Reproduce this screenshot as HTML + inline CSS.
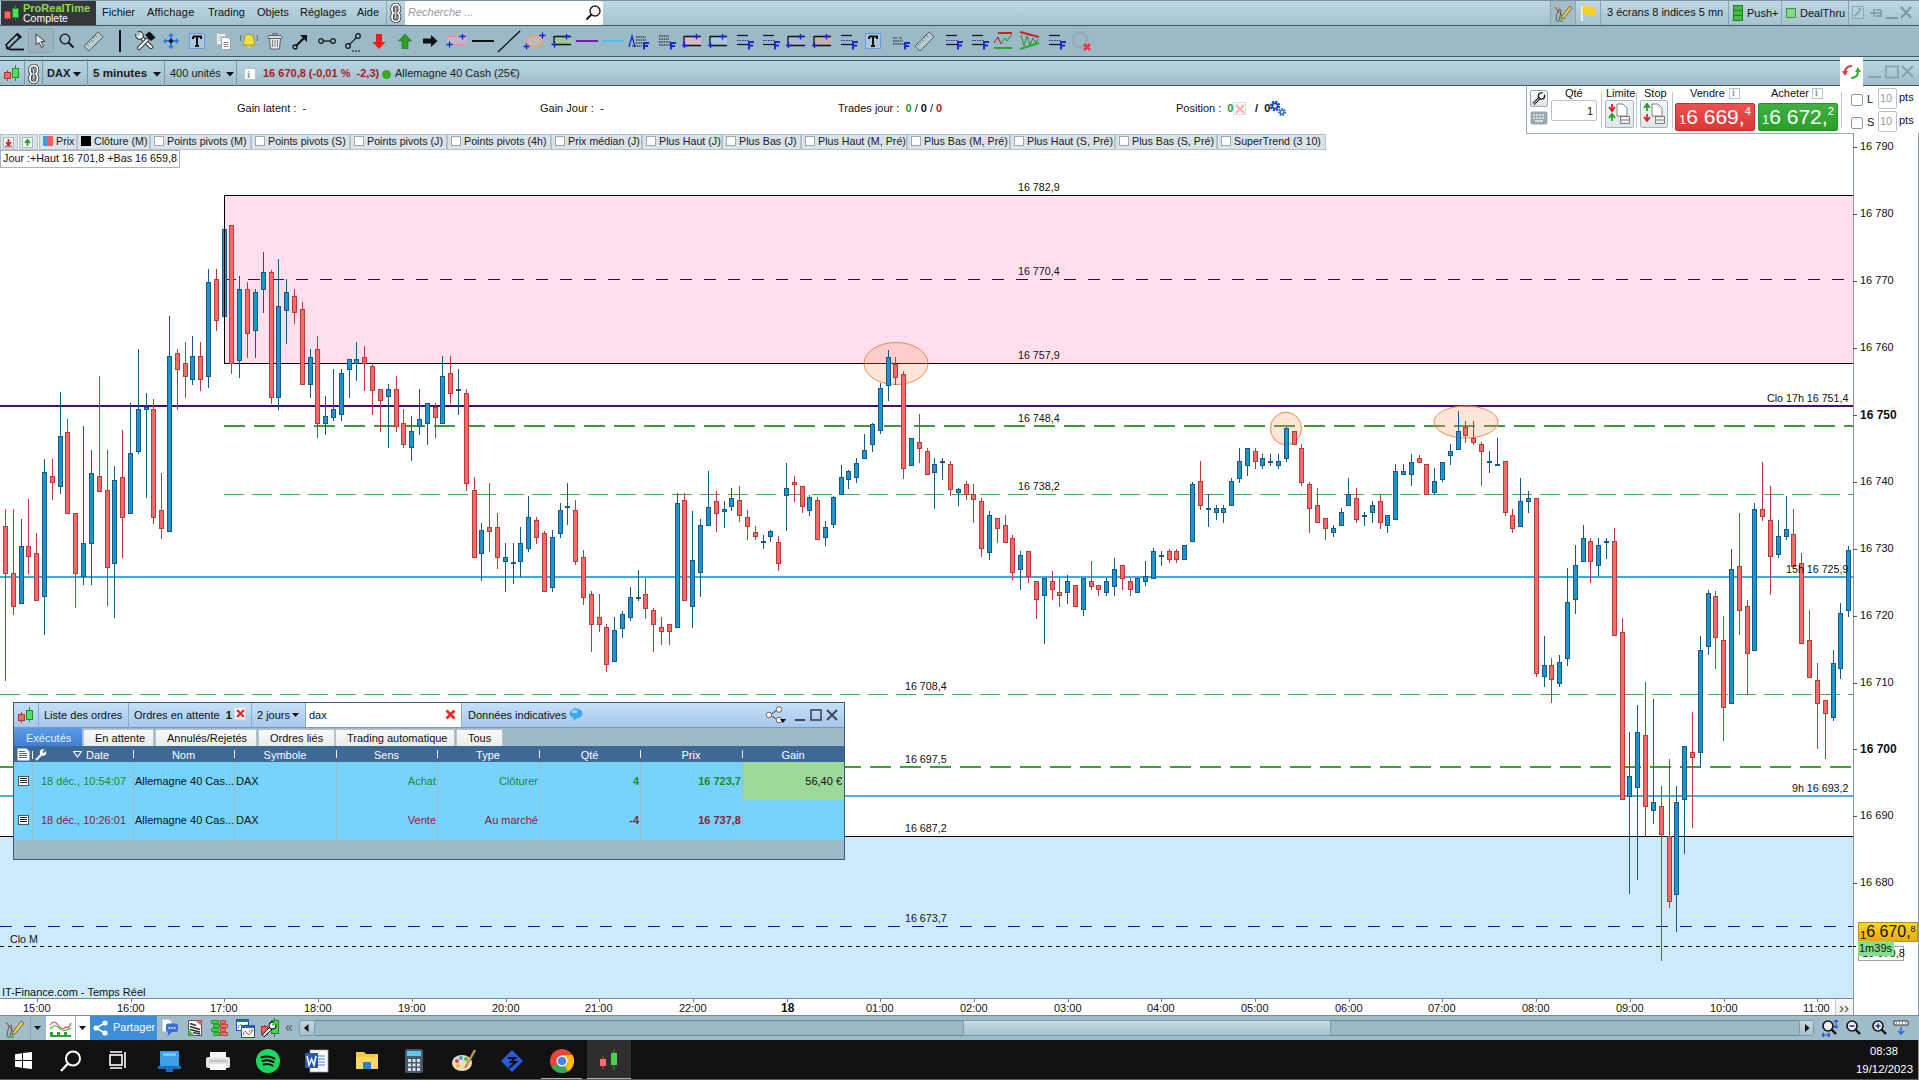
<!DOCTYPE html>
<html><head><meta charset="utf-8">
<style>
*{margin:0;padding:0;box-sizing:border-box}
html,body{width:1919px;height:1080px;overflow:hidden;background:#fff;font-family:"Liberation Sans",sans-serif;font-size:12px;color:#111}
.a{position:absolute}
.t{position:absolute;white-space:nowrap;line-height:1}
#menubar{left:0;top:0;width:1919px;height:26px;background:linear-gradient(#bed9e4,#a5c2ce);border-top:1px solid #7a949f;border-bottom:1px solid #3f5b68}
#logo{left:1px;top:1px;width:95px;height:24px;background:#33373b}
#toolbar{left:0;top:26px;width:1919px;height:31px;background:#9bb9c7;border-bottom:1px solid #3f5b68}
#instbar{left:0;top:57px;width:1919px;height:29px;background:linear-gradient(#b8d6e2,#a0bdcb);border-top:4px solid #b5d3df;border-bottom:1px solid #3f5b68}
#instline{left:0;top:60px;width:1919px;height:1px;background:#3f5b68}
#gainbar{left:0;top:86px;width:1919px;height:47px;background:#fff}
#legend{left:0;top:133px;width:1853px;height:17px;background:#fff}
.lg{position:absolute;top:134px;height:16px;background:#d9e3e8;border:1px solid #b4c2c9;font-size:10.7px;line-height:13px;padding-left:3px;white-space:nowrap;color:#222}
.cb{display:inline-block;width:10px;height:10px;border:1px solid #a0a8ac;background:#fff;vertical-align:-1px;margin-right:3px}
#axis{left:1853px;top:133px;width:66px;height:884px;background:#fff;border-left:1px solid #8a9aa3}
.pl{position:absolute;left:1860px;font-size:11px;line-height:1;color:#111}
.tick{position:absolute;left:1853px;width:4px;height:1px;background:#555}
#timebar{left:0;top:998px;width:1853px;height:18px;background:#fff;border-top:1px solid #7a8a90;border-bottom:1px solid #7a8a90}
.tl{position:absolute;top:1003px;font-size:11px;line-height:1;color:#111}
#bottombar{left:0;top:1016px;width:1919px;height:24px;background:#9fbccb}
#taskbar{left:0;top:1040px;width:1919px;height:40px;background:#111}
</style></head><body>

<!-- MENU BAR -->
<div id="menubar" class="a"></div>
<div id="logo" class="a"></div>
<svg class="a" style="left:3px;top:4px" width="18" height="18" viewBox="0 0 18 18">
<line x1="4.5" y1="6" x2="4.5" y2="16" stroke="#c03030"/><rect x="1.5" y="7.5" width="6" height="7" fill="#f06a6a" stroke="#b83030"/>
<line x1="12.5" y1="1" x2="12.5" y2="16" stroke="#209030"/><rect x="9.5" y="4.5" width="6" height="9" fill="#50e060" stroke="#189028"/>
</svg>
<div class="t" style="left:23px;top:3px;font-size:11px;font-weight:700;color:#8ade44">ProRealTime</div>
<div class="t" style="left:23px;top:13px;font-size:10.5px;color:#fff">Complete</div>
<div class="t" style="left:102px;top:7px;font-size:11px">Fichier</div>
<div class="t" style="left:147px;top:7px;font-size:11px;letter-spacing:0.2px">Affichage</div>
<div class="t" style="left:208px;top:7px;font-size:11px">Trading</div>
<div class="t" style="left:257px;top:7px;font-size:11px">Objets</div>
<div class="t" style="left:300px;top:7px;font-size:11px">Réglages</div>
<div class="t" style="left:357px;top:7px;font-size:11px">Aide</div>
<div class="a" style="left:386px;top:1px;width:1px;height:24px;background:#8aa4b0"></div>
<svg class="a" style="left:390px;top:3px" width="12" height="20" viewBox="0 0 12 20"><rect x="2" y="1.5" width="7.5" height="9" rx="3.75" fill="none" stroke="#333" stroke-width="3.4"/><rect x="2" y="9.5" width="7.5" height="9" rx="3.75" fill="none" stroke="#333" stroke-width="3.4"/><rect x="2" y="1.5" width="7.5" height="9" rx="3.75" fill="none" stroke="#fff" stroke-width="1.8"/><rect x="2" y="9.5" width="7.5" height="9" rx="3.75" fill="none" stroke="#fff" stroke-width="1.8"/><rect x="4.8" y="4.5" width="2" height="11" rx="1" fill="#fff" stroke="#333" stroke-width="0.8"/></svg>
<div class="a" style="left:405px;top:1px;width:198px;height:24px;background:#fff;border-radius:2px"></div>
<div class="t" style="left:408px;top:7px;font-size:11px;font-style:italic;color:#9a9a9a">Recherche ...</div>
<svg class="a" style="left:585px;top:4px" width="17" height="18" viewBox="0 0 17 18"><circle cx="10" cy="7" r="5" fill="#f4f4f4" stroke="#222" stroke-width="1.4"/><line x1="6.5" y1="10.5" x2="1.5" y2="15.5" stroke="#111" stroke-width="2"/></svg>
<!-- right side -->
<div class="a" style="left:1550px;top:1px;width:1px;height:24px;background:#8aa4b0"></div>
<div class="a" style="left:1551px;top:1px;width:24px;height:24px;background:#a4bcc8"></div>
<svg class="a" style="left:1553px;top:3px" width="20" height="20" viewBox="0 0 20 20"><path d="M2 4 L12 16" stroke="#d03030" stroke-width="1"/><path d="M3 17 Q4 6 7 6 Q9 8 6 17" fill="none" stroke="#444" stroke-width="0.8"/><line x1="3" y1="18" x2="10" y2="18" stroke="#20a020" stroke-width="1.2"/><path d="M17 3 L19 5 L11 15 L8 16 L9 13 Z" fill="#f0d040" stroke="#555" stroke-width="0.8"/></svg>
<div class="a" style="left:1575px;top:1px;width:1px;height:24px;background:#8aa4b0"></div>
<svg class="a" style="left:1580px;top:4px" width="17" height="18" viewBox="0 0 17 18"><line x1="2" y1="2" x2="2" y2="17" stroke="#fff" stroke-width="1.5"/><path d="M2.5 2 Q8 0 10 3 Q13 5 16 3 L16 11 Q13 13 10 11 Q7 9 2.5 11 Z" fill="#f8d020"/></svg>
<div class="a" style="left:1600px;top:1px;width:1px;height:24px;background:#8aa4b0"></div>
<div class="t" style="left:1607px;top:7px;font-size:11px">3 écrans 8 indices 5 mn</div>
<div class="a" style="left:1728px;top:1px;width:1px;height:24px;background:#8aa4b0"></div>
<div class="a" style="left:1733px;top:5px;width:10px;height:16px;background:#40c040;border:1px solid #2a7a2a"></div>
<div class="a" style="left:1734px;top:10px;width:8px;height:1px;background:#2a7a2a"></div>
<div class="a" style="left:1734px;top:15px;width:8px;height:1px;background:#2a7a2a"></div>
<div class="t" style="left:1747px;top:8px;font-size:11px">Push+</div>
<div class="a" style="left:1781px;top:1px;width:1px;height:24px;background:#8aa4b0"></div>
<div class="a" style="left:1786px;top:8px;width:10px;height:10px;background:#7ee07e;border:1px solid #4a8a5a"></div>
<div class="t" style="left:1800px;top:8px;font-size:11px">DealThru</div>
<div class="a" style="left:1848px;top:1px;width:1px;height:24px;background:#8aa4b0"></div>
<svg class="a" style="left:1852px;top:5px" width="62" height="16" viewBox="0 0 62 16"><rect x="0.5" y="1.5" width="11" height="12" fill="none" stroke="#7a98a8" stroke-dasharray="2 1"/><path d="M3 11 L8 5 M7 3 L9 5" stroke="#7a98a8" stroke-width="1.3"/><path d="M18 8 L30 8 M22 4 L22 12 M24 5 L29 5 L29 11 L24 11" stroke="#7a98a8" stroke-width="1.5" fill="none"/><line x1="34" y1="13" x2="46" y2="13" stroke="#7a98a8" stroke-width="2"/><path d="M49 2 L59 13 M59 2 L49 13" stroke="#7a98a8" stroke-width="2"/></svg>

<!-- TOOLBAR -->
<div id="toolbar" class="a"></div>
<svg class="a" style="left:5px;top:31px" width="20" height="20" viewBox="0 0 20 20"><path d="M3 18 L1 14 L12 3 L15 6 L4 17 Z" fill="none" stroke="#111" stroke-width="1.5"/><path d="M11 4 L13 2 L17 6 L15 8 Z" fill="#111"/><path d="M1 14 L1 18 L5 18 Z" fill="#111"/><line x1="4" y1="18.5" x2="19" y2="18.5" stroke="#111" stroke-width="1.8"/></svg>
<div class="a" style="left:28px;top:28px;width:26px;height:25px;background:#9cb4c0;border:1px solid #8aa2ae;border-radius:3px"></div>
<svg class="a" style="left:35px;top:33px" width="12" height="16" viewBox="0 0 12 16"><path d="M1 1 L1 12 L4 9.5 L6.5 14.5 L8.5 13.5 L6 8.5 L10 8.5 Z" fill="#e8e8e8" stroke="#333" stroke-width="0.9"/></svg>
<svg class="a" style="left:59px;top:33px" width="16" height="16" viewBox="0 0 16 16"><circle cx="6" cy="6" r="4.8" fill="none" stroke="#111" stroke-width="1.3"/><line x1="9.5" y1="9.5" x2="14.5" y2="14.5" stroke="#111" stroke-width="1.8"/></svg>
<svg class="a" style="left:83px;top:31px" width="21" height="21" viewBox="0 0 21 21"><g transform="rotate(-45 10.5 10.5)"><rect x="0.5" y="7" width="20" height="7" fill="#b8ccd4" stroke="#555" stroke-width="0.9"/><path d="M4 7v3M7 7v2M10 7v3M13 7v2M16 7v3" stroke="#555" stroke-width="0.8"/></g></svg>
<div class="a" style="left:119px;top:30px;width:2px;height:22px;background:#111"></div>
<svg class="a" style="left:135px;top:31px" width="21" height="20" viewBox="0 0 21 20"><path d="M6 6 L16 16" stroke="#333" stroke-width="4.2" stroke-linecap="round"/><path d="M6 6 L16 16" stroke="#f4f4f4" stroke-width="2.4" stroke-linecap="round"/><circle cx="4.5" cy="4.5" r="3.8" fill="#f4f4f4" stroke="#333" stroke-width="1.2"/><path d="M1 1 L4.5 4.5" stroke="#9bb9c7" stroke-width="2.6"/><path d="M4 17 L12 9" stroke="#333" stroke-width="4.2" stroke-linecap="round"/><path d="M4 17 L12 9" stroke="#f4f4f4" stroke-width="2.4" stroke-linecap="round"/><path d="M10 4 L14.5 0.5 L20.5 6.5 L16 10 Z" fill="#111"/></svg>
<svg class="a" style="left:162px;top:32px" width="18" height="18" viewBox="0 0 18 18"><path d="M9 1 L12 4 L10 4 L10 8 L14 8 L14 6 L17 9 L14 12 L14 10 L10 10 L10 14 L12 14 L9 17 L6 14 L8 14 L8 10 L4 10 L4 12 L1 9 L4 6 L4 8 L8 8 L8 4 L6 4 Z" fill="#2a7ae0"/><circle cx="9" cy="9" r="2" fill="#111"/></svg>
<svg class="a" style="left:189px;top:33px" width="17" height="17" viewBox="0 0 17 17"><rect x="0.5" y="0.5" width="15" height="15" fill="#acc8dc" stroke="#6a9ae0"/><path d="M4 3.5 L12 3.5 L12 6 M4 3.5 L4 6 M8 3.5 L8 13 M6 13 L10 13" stroke="#111" stroke-width="2" fill="none"/></svg>
<svg class="a" style="left:215px;top:32px" width="17" height="18" viewBox="0 0 17 18"><rect x="1.5" y="1.5" width="9" height="11" fill="#e4ecf0" stroke="#b4c0c8"/><path d="M3 4.5h6M3 6.5h6M3 8.5h6" stroke="#c8d0d4"/><path d="M6.5 5.5 H13 L15.5 8 V17.5 H6.5 Z" fill="#fff" stroke="#98a6ae"/><path d="M8.5 10.5h5M8.5 12.5h5M8.5 14.5h5" stroke="#888"/></svg>
<svg class="a" style="left:239px;top:32px" width="20" height="18" viewBox="0 0 20 18"><path d="M10 2 Q5 3 5 9 L4 13 L16 13 L15 9 Q15 3 10 2 Z" fill="#f0e040" stroke="#9a8a10" stroke-width="0.8"/><circle cx="10" cy="15" r="1.8" fill="#e0d040"/><path d="M2 3 Q1 6 2 9 M18 3 Q19 6 18 9" stroke="#555" stroke-width="0.8" fill="none"/></svg>
<svg class="a" style="left:267px;top:33px" width="16" height="17" viewBox="0 0 16 17"><rect x="1" y="2.5" width="14" height="3" rx="1" fill="#ddd" stroke="#555" stroke-width="0.9"/><rect x="6" y="0.5" width="4" height="2" fill="none" stroke="#555" stroke-width="0.8"/><path d="M2.5 5.5 L3.5 16 L12.5 16 L13.5 5.5 Z" fill="#e8e8e8" stroke="#555" stroke-width="0.9"/><path d="M5.5 7v7M8 7v7M10.5 7v7" stroke="#777" stroke-width="0.9"/></svg>
<svg class="a" style="left:292px;top:33px" width="17" height="17" viewBox="0 0 17 17"><circle cx="3" cy="14" r="2" fill="none" stroke="#111" stroke-width="1.3"/><path d="M4.5 12.5 L14 3" stroke="#111" stroke-width="2"/><path d="M8 2 L15 2 L15 9 Z" fill="#111"/></svg>
<svg class="a" style="left:318px;top:37px" width="18" height="8" viewBox="0 0 18 8"><circle cx="3" cy="4" r="2.3" fill="none" stroke="#111" stroke-width="1.2"/><circle cx="15" cy="4" r="2.3" fill="none" stroke="#111" stroke-width="1.2"/><line x1="5.3" y1="4" x2="12.7" y2="4" stroke="#111" stroke-width="1.3"/></svg>
<svg class="a" style="left:345px;top:33px" width="17" height="19" viewBox="0 0 17 19"><circle cx="3" cy="13" r="2.3" fill="none" stroke="#111" stroke-width="1.2"/><circle cx="13" cy="3" r="2.3" fill="none" stroke="#111" stroke-width="1.2"/><line x1="4.6" y1="11.4" x2="11.4" y2="4.6" stroke="#111" stroke-width="1.2"/><path d="M7 18h2M10 18h2M13 18h2" stroke="#111" stroke-width="1"/></svg>
<svg class="a" style="left:372px;top:34px" width="14" height="15" viewBox="0 0 14 15"><path d="M4 0 L10 0 L10 8 L13.5 8 L7 15 L0.5 8 L4 8 Z" fill="#ee1a1a"/></svg>
<svg class="a" style="left:398px;top:34px" width="14" height="15" viewBox="0 0 14 15"><path d="M4 15 L10 15 L10 7 L13.5 7 L7 0 L0.5 7 L4 7 Z" fill="#2aa02a" stroke="#1a701a" stroke-width="0.6"/></svg>
<svg class="a" style="left:423px;top:35px" width="15" height="12" viewBox="0 0 15 12"><path d="M0 3.5 L8 3.5 L8 0 L14.5 6 L8 12 L8 8.5 L0 8.5 Z" fill="#111"/></svg>
<svg class="a" style="left:445px;top:34px" width="24" height="14" viewBox="0 0 24 14"><rect x="2" y="2.5" width="20" height="8" fill="#c0b8c8"/><path d="M2 2.5 L22 2.5 M2 10.5 L22 10.5" stroke="#e89090" stroke-width="1.2"/><path d="M14.5 2.5 H20.5 M17.5 -0.5 V5.5 M1.5 10.5 H7.5 M4.5 7.5 V13.5" stroke="#1020e0" stroke-width="1.3"/></svg>
<div class="a" style="left:472px;top:40px;width:22px;height:2px;background:#111"></div>
<svg class="a" style="left:497px;top:30px" width="24" height="23" viewBox="0 0 24 23"><line x1="1" y1="22" x2="23" y2="1" stroke="#111" stroke-width="1.3"/></svg>
<svg class="a" style="left:523px;top:32px" width="23" height="18" viewBox="0 0 23 18"><ellipse cx="11.5" cy="9" rx="8" ry="5.5" fill="#c0b8c0" stroke="#f0a060" stroke-width="1.3"/><path d="M16.5 3.5 H22.5 M19.5 0.5 V6.5 M0.5 14.5 H6.5 M3.5 11.5 V17.5" stroke="#1020e0" stroke-width="1.3"/></svg>
<svg class="a" style="left:551px;top:34px" width="22" height="14" viewBox="0 0 22 14"><rect x="3" y="2.5" width="17" height="8" fill="#a0c8a0"/><path d="M3 2 L3 11 M3 10.5 L20 10.5 M3 2.5 L20 2.5" stroke="#111" stroke-width="1.3" fill="none"/><path d="M0.5 10.5 H6.5 M3.5 7.5 V13.5 M12.5 2.5 H18.5 M15.5 -0.5 V5.5" stroke="#1020d0" stroke-width="1.3"/></svg>
<div class="a" style="left:576px;top:40px;width:22px;height:2px;background:#7a1ab0"></div>
<div class="a" style="left:602px;top:40px;width:22px;height:2px;background:#50c0f0"></div>
<svg class="a" style="left:628px;top:34px" width="23" height="16" viewBox="0 0 23 16"><path d="M1 13 L4 2 L7 13" stroke="#1020d0" stroke-width="1.2" fill="none"/><path d="M8 3h10M8 6h10M8 9h10M4 12h10" stroke="#111" stroke-width="1" stroke-dasharray="1.5 0.8"/><path d="M16 15.5 L16 9 L21 9 M16 12 L20 12" stroke="#1a2ad0" stroke-width="2" fill="none"/></svg>
<svg class="a" style="left:658px;top:34px" width="20" height="16" viewBox="0 0 20 16"><path d="M1 2h10M1 5h10M1 8h12M1 11h12" stroke="#111" stroke-width="1" stroke-dasharray="1.5 0.8"/><path d="M13 15.5 L13 9 L18 9 M13 12 L17 12" stroke="#1a2ad0" stroke-width="2" fill="none"/></svg>
<svg class="a" style="left:682px;top:34px" width="21" height="14" viewBox="0 0 21 14"><rect x="2" y="2.5" width="17" height="9" fill="#d8b8c8"/><path d="M2 2 L2 12 M2 11.5 L19 11.5 M2 2.5 L19 2.5" stroke="#111" stroke-width="1.3" fill="none"/><path d="M-0.5 11.5 H5.5 M2.5 8.5 V14.5 M11.5 2.5 H17.5 M14.5 -0.5 V5.5" stroke="#1020d0" stroke-width="1.3"/></svg><svg class="a" style="left:708px;top:34px" width="21" height="14" viewBox="0 0 21 14"><rect x="2" y="2.5" width="17" height="9" fill="#a8c8e0"/><path d="M2 2 L2 12 M2 11.5 L19 11.5 M2 2.5 L19 2.5" stroke="#111" stroke-width="1.3" fill="none"/><path d="M-0.5 11.5 H5.5 M2.5 8.5 V14.5 M11.5 2.5 H17.5 M14.5 -0.5 V5.5" stroke="#1020d0" stroke-width="1.3"/></svg><svg class="a" style="left:736px;top:33px" width="20" height="18" viewBox="0 0 20 18"><line x1="1" y1="2.5" x2="12" y2="2.5" stroke="#111" stroke-width="1.2"/><line x1="1" y1="7.5" x2="13" y2="7.5" stroke="#2030c0" stroke-width="1" stroke-dasharray="1.5 1"/><line x1="1" y1="11.5" x2="12" y2="11.5" stroke="#111" stroke-width="1.2"/><path d="M13 16.5 L13 9 L18 9 M13 12.5 L17 12.5" stroke="#1a2ad0" stroke-width="2" fill="none"/></svg><svg class="a" style="left:762px;top:33px" width="20" height="18" viewBox="0 0 20 18"><line x1="1" y1="2.5" x2="12" y2="2.5" stroke="#111" stroke-width="1.2"/><line x1="1" y1="7.5" x2="13" y2="7.5" stroke="#2030c0" stroke-width="1" stroke-dasharray="1.5 1"/><line x1="1" y1="11.5" x2="12" y2="11.5" stroke="#111" stroke-width="1.2"/><path d="M13 16.5 L13 9 L18 9 M13 12.5 L17 12.5" stroke="#1a2ad0" stroke-width="2" fill="none"/></svg><svg class="a" style="left:786px;top:34px" width="21" height="14" viewBox="0 0 21 14"><rect x="2" y="2.5" width="17" height="9" fill="#a8b8d8"/><path d="M2 2 L2 12 M2 11.5 L19 11.5 M2 2.5 L19 2.5" stroke="#111" stroke-width="1.3" fill="none"/><path d="M-0.5 11.5 H5.5 M2.5 8.5 V14.5 M11.5 2.5 H17.5 M14.5 -0.5 V5.5" stroke="#1020d0" stroke-width="1.3"/></svg><svg class="a" style="left:812px;top:34px" width="21" height="14" viewBox="0 0 21 14"><rect x="2" y="2.5" width="17" height="9" fill="#c8b0b0"/><path d="M2 2 L2 12 M2 11.5 L19 11.5 M2 2.5 L19 2.5" stroke="#111" stroke-width="1.3" fill="none"/><path d="M-0.5 11.5 H5.5 M2.5 8.5 V14.5 M11.5 2.5 H17.5 M14.5 -0.5 V5.5" stroke="#1020d0" stroke-width="1.3"/></svg><svg class="a" style="left:840px;top:33px" width="20" height="18" viewBox="0 0 20 18"><line x1="1" y1="2.5" x2="12" y2="2.5" stroke="#111" stroke-width="1.2"/><line x1="1" y1="7.5" x2="13" y2="7.5" stroke="#2030c0" stroke-width="1" stroke-dasharray="1.5 1"/><line x1="1" y1="11.5" x2="12" y2="11.5" stroke="#111" stroke-width="1.2"/><path d="M13 16.5 L13 9 L18 9 M13 12.5 L17 12.5" stroke="#1a2ad0" stroke-width="2" fill="none"/></svg>
<svg class="a" style="left:865px;top:33px" width="17" height="17" viewBox="0 0 17 17"><rect x="0.5" y="0.5" width="15" height="15" fill="#acc8dc" stroke="#6a9ae0"/><path d="M4 3.5 L12 3.5 L12 6 M4 3.5 L4 6 M8 3.5 L8 13 M6 13 L10 13" stroke="#111" stroke-width="2" fill="none"/></svg>
<svg class="a" style="left:892px;top:35px" width="19" height="15" viewBox="0 0 19 15"><path d="M1 3h4M7 3h3M1 6h10M1 9h12" stroke="#111" stroke-width="1" stroke-dasharray="1.5 0.8"/><path d="M13 14.5 L13 8 L18 8 M13 11 L17 11" stroke="#1a2ad0" stroke-width="2" fill="none"/></svg>
<svg class="a" style="left:914px;top:31px" width="21" height="21" viewBox="0 0 21 21"><g transform="rotate(-45 10.5 10.5)"><rect x="0.5" y="7" width="20" height="7" fill="#b8ccd4" stroke="#555" stroke-width="0.9"/><path d="M4 7v3M7 7v2M10 7v3M13 7v2M16 7v3" stroke="#555" stroke-width="0.8"/></g></svg>
<svg class="a" style="left:945px;top:33px" width="20" height="18" viewBox="0 0 20 18"><line x1="1" y1="2.5" x2="12" y2="2.5" stroke="#111" stroke-width="1.2"/><line x1="1" y1="7.5" x2="13" y2="7.5" stroke="#2030c0" stroke-width="1" stroke-dasharray="1.5 1"/><line x1="1" y1="11.5" x2="12" y2="11.5" stroke="#111" stroke-width="1.2"/><path d="M13 16.5 L13 9 L18 9 M13 12.5 L17 12.5" stroke="#1a2ad0" stroke-width="2" fill="none"/></svg><svg class="a" style="left:971px;top:33px" width="20" height="18" viewBox="0 0 20 18"><line x1="1" y1="2.5" x2="12" y2="2.5" stroke="#111" stroke-width="1.2"/><line x1="1" y1="7.5" x2="13" y2="7.5" stroke="#2030c0" stroke-width="1" stroke-dasharray="1.5 1"/><line x1="1" y1="11.5" x2="12" y2="11.5" stroke="#111" stroke-width="1.2"/><path d="M13 16.5 L13 9 L18 9 M13 12.5 L17 12.5" stroke="#1a2ad0" stroke-width="2" fill="none"/></svg>
<svg class="a" style="left:993px;top:31px" width="21" height="20" viewBox="0 0 21 20"><line x1="5" y1="2" x2="19" y2="2" stroke="#d02020" stroke-width="2"/><line x1="1" y1="17" x2="19" y2="17" stroke="#20b020" stroke-width="2"/><path d="M1 12 L5 6 L8 13 L12 7 L14 10 L19 3" stroke="#20a020" stroke-width="1" fill="none"/><path d="M1 12 L5 6 L8 13" stroke="#d02020" stroke-width="1" fill="none"/></svg>
<svg class="a" style="left:1019px;top:30px" width="21" height="22" viewBox="0 0 21 22"><line x1="1" y1="2" x2="20" y2="7" stroke="#d02020" stroke-width="2"/><line x1="1" y1="19" x2="20" y2="13" stroke="#20b020" stroke-width="2"/><path d="M2 5 L5 16 L8 6 L11 15 L14 8 L17 13 L19 9" stroke="#208a20" stroke-width="0.9" fill="none"/></svg>
<svg class="a" style="left:1048px;top:33px" width="20" height="18" viewBox="0 0 20 18"><line x1="1" y1="2.5" x2="12" y2="2.5" stroke="#111" stroke-width="1.2"/><line x1="1" y1="7.5" x2="13" y2="7.5" stroke="#2030c0" stroke-width="1" stroke-dasharray="1.5 1"/><line x1="1" y1="11.5" x2="12" y2="11.5" stroke="#111" stroke-width="1.2"/><path d="M13 16.5 L13 9 L18 9 M13 12.5 L17 12.5" stroke="#1a2ad0" stroke-width="2" fill="none"/></svg>
<svg class="a" style="left:1071px;top:31px" width="21" height="21" viewBox="0 0 21 21"><circle cx="9" cy="9" r="7" fill="none" stroke="#98a8b0" stroke-width="3" stroke-dasharray="2 1"/><path d="M13 13 L19 19 M19 13 L13 19" stroke="#e83a3a" stroke-width="2.5"/></svg>

<!-- INSTRUMENT BAR -->
<div id="instbar" class="a"></div><div id="instline" class="a"></div>
<div class="a" style="left:24px;top:59px;width:1px;height:27px;background:#7d97a4"></div>
<div class="a" style="left:42px;top:59px;width:1px;height:27px;background:#7d97a4"></div>
<div class="a" style="left:87px;top:59px;width:1px;height:27px;background:#7d97a4"></div>
<div class="a" style="left:164px;top:59px;width:1px;height:27px;background:#7d97a4"></div>
<div class="a" style="left:236px;top:59px;width:1px;height:27px;background:#7d97a4"></div>
<svg class="a" style="left:3px;top:64px" width="18" height="18" viewBox="0 0 18 18">
<line x1="4.5" y1="6" x2="4.5" y2="17" stroke="#c03030"/><rect x="1.5" y="8.5" width="6" height="6" fill="#f06a6a" stroke="#b83030"/>
<line x1="12.5" y1="1" x2="12.5" y2="17" stroke="#209030"/><rect x="9.5" y="4.5" width="6" height="9" fill="#50e060" stroke="#189028"/></svg>
<svg class="a" style="left:28px;top:64px" width="12" height="20" viewBox="0 0 12 20"><rect x="2" y="1.5" width="7.5" height="9" rx="3.75" fill="none" stroke="#333" stroke-width="3.4"/><rect x="2" y="9.5" width="7.5" height="9" rx="3.75" fill="none" stroke="#333" stroke-width="3.4"/><rect x="2" y="1.5" width="7.5" height="9" rx="3.75" fill="none" stroke="#fff" stroke-width="1.8"/><rect x="2" y="9.5" width="7.5" height="9" rx="3.75" fill="none" stroke="#fff" stroke-width="1.8"/><rect x="4.8" y="4.5" width="2" height="11" rx="1" fill="#fff" stroke="#333" stroke-width="0.8"/></svg>
<div class="t" style="left:47px;top:68px;font-size:11px;font-weight:700;color:#1a1a2a">DAX</div>
<svg class="a" style="left:73px;top:72px" width="9" height="5"><path d="M0 0 L8 0 L4 4.5 Z" fill="#111"/></svg>
<div class="t" style="left:93px;top:67px;font-size:11.6px;font-weight:700;color:#1a1a1a">5 minutes</div>
<svg class="a" style="left:153px;top:72px" width="9" height="5"><path d="M0 0 L8 0 L4 4.5 Z" fill="#111"/></svg>
<div class="t" style="left:170px;top:68px;font-size:11px;color:#1a1a1a">400 unités</div>
<svg class="a" style="left:226px;top:72px" width="9" height="5"><path d="M0 0 L8 0 L4 4.5 Z" fill="#111"/></svg>
<div class="a" style="left:244px;top:68px;width:12px;height:12px;background:#fff;border:1px solid #b8c4ca"></div>
<div class="t" style="left:247px;top:69px;font-size:11px;font-weight:700;color:#999;font-family:'Liberation Serif',serif">i</div>
<div class="t" style="left:263px;top:68px;font-size:11px;font-weight:700;color:#a81a26">16 670,8 (-0,01 % &nbsp;-2,3)</div>
<div class="a" style="left:382px;top:70px;width:9px;height:9px;border-radius:50%;background:#3aaa1a"></div>
<div class="t" style="left:395px;top:68px;font-size:11px;color:#1a1a1a">Allemagne 40 Cash (25€)</div>
<div class="a" style="left:1840px;top:57px;width:23px;height:29px;background:#fff"></div>
<svg class="a" style="left:1842px;top:63px" width="20" height="18" viewBox="0 0 20 18"><path d="M10 3 Q3 3 3 10" stroke="#e03a3a" stroke-width="2.2" fill="none"/><path d="M0 8 L3 13 L6 8 Z" fill="#e03a3a"/><path d="M9 15 Q16 15 16 8" stroke="#30b030" stroke-width="2.2" fill="none"/><path d="M13 9 L16 4 L19 9 Z" fill="#30b030"/></svg>
<svg class="a" style="left:1866px;top:64px" width="50" height="16" viewBox="0 0 50 16"><line x1="2" y1="13" x2="15" y2="13" stroke="#8aa2ae" stroke-width="2"/><rect x="20" y="2.5" width="12" height="11" fill="none" stroke="#8aa2ae" stroke-width="1.8"/><path d="M36 2 L47 13 M47 2 L36 13" stroke="#8aa2ae" stroke-width="2"/></svg>

<!-- GAIN BAR -->
<div id="gainbar" class="a"></div>
<div class="t" style="left:237px;top:103px;font-size:11px">Gain latent : &nbsp;-</div>
<div class="t" style="left:540px;top:103px;font-size:11px">Gain Jour : &nbsp;-</div>
<div class="t" style="left:838px;top:103px;font-size:11px">Trades jour : &nbsp;<b style="color:#2a9a2a">0</b> / <b>0</b> / <b style="color:#c02020">0</b></div>
<div class="t" style="left:1176px;top:103px;font-size:11px">Position : &nbsp;<b style="color:#2a9a2a">0</b></div>
<div class="a" style="left:1233px;top:102px;width:13px;height:13px;border:1px solid #ddd;background:#fafafa"></div>
<svg class="a" style="left:1235px;top:104px" width="10" height="10"><path d="M1 1 L9 9 M9 1 L1 9" stroke="#f8b0b0" stroke-width="2.2"/></svg>
<div class="t" style="left:1255px;top:103px;font-size:11px"><b>/ &nbsp;0</b></div>
<svg class="a" style="left:1269px;top:100px" width="18" height="17" viewBox="0 0 18 17"><circle cx="6" cy="6" r="4" fill="none" stroke="#1a4ab8" stroke-width="2.6" stroke-dasharray="2 1.1"/><circle cx="6" cy="6" r="2.6" fill="none" stroke="#1a4ab8" stroke-width="1.6"/><circle cx="13" cy="12" r="3" fill="none" stroke="#2a6ad8" stroke-width="2.2" stroke-dasharray="1.6 1"/><circle cx="13" cy="12" r="1.8" fill="none" stroke="#2a6ad8" stroke-width="1.2"/></svg>
<!-- order panel -->
<div class="a" style="left:1526px;top:86px;width:1px;height:47px;background:#9aaab2"></div>
<div class="a" style="left:1526px;top:133px;width:393px;height:1px;background:#9aaab2"></div>
<div class="a" style="left:1530px;top:90px;width:18px;height:17px;background:linear-gradient(#fafafa,#dde4e8);border:1px solid #9aa8b0;border-radius:2px"></div>
<svg class="a" style="left:1531px;top:91px" width="16" height="15" viewBox="0 0 16 15"><path d="M2.5 13 L8.5 7" stroke="#222" stroke-width="3"/><path d="M2.5 13 L8.5 7" stroke="#fff" stroke-width="1"/><circle cx="10.5" cy="5" r="3.8" fill="#222"/><circle cx="10.5" cy="5" r="2.4" fill="#fff"/><path d="M10.5 5 L14.5 1" stroke="#f4f6f8" stroke-width="2.4"/></svg>
<svg class="a" style="left:1530px;top:111px" width="18" height="14" viewBox="0 0 18 14"><rect x="0.5" y="0.5" width="17" height="13" rx="2" fill="#9aa8b0"/><path d="M3 4h2M6 4h2M9 4h2M12 4h2M3 7h2M6 7h2M9 7h2M12 7h2M5 10h8" stroke="#e8eef0" stroke-width="1.3"/></svg>
<div class="t" style="left:1565px;top:88px;font-size:11px">Qté</div>
<div class="a" style="left:1551px;top:100px;width:46px;height:21px;background:#fff;border:1px solid #b8c2c8;border-radius:2px"></div>
<div class="t" style="left:1587px;top:106px;font-size:11px">1</div>
<div class="a" style="left:1601px;top:92px;width:1px;height:36px;background:#c0c8cc"></div>
<div class="t" style="left:1606px;top:88px;font-size:11px">Limite</div>
<div class="a" style="left:1605px;top:100px;width:29px;height:28px;background:linear-gradient(#f4f6f8,#dfe6ea);border:1px solid #a8b4ba;border-radius:2px"></div>
<svg class="a" style="left:1608px;top:103px" width="23" height="22" viewBox="0 0 23 22"><path d="M4 1v6M1 4l3 4 3-4" stroke="#e02020" stroke-width="1.8" fill="none"/><path d="M4 18v-6M1 15l3-4 3 4" stroke="#20a020" stroke-width="1.8" fill="none"/><path d="M9 1h6l4 4v8h-10z" fill="#fff" stroke="#666" stroke-width="0.8"/><rect x="12.5" y="13.5" width="9" height="7" fill="#eee" stroke="#666" stroke-width="0.8"/><path d="M12.5 17h9" stroke="#666" stroke-width="0.8"/></svg>
<div class="a" style="left:1636px;top:92px;width:1px;height:36px;background:#c0c8cc"></div>
<div class="t" style="left:1644px;top:88px;font-size:11px">Stop</div>
<div class="a" style="left:1640px;top:100px;width:28px;height:28px;background:linear-gradient(#f4f6f8,#dfe6ea);border:1px solid #a8b4ba;border-radius:2px"></div>
<svg class="a" style="left:1643px;top:103px" width="23" height="22" viewBox="0 0 23 22"><path d="M4 8V2M1 5l3-4 3 4" stroke="#20a020" stroke-width="1.8" fill="none"/><path d="M4 11v6M1 14l3 4 3-4" stroke="#e02020" stroke-width="1.8" fill="none"/><path d="M9 1h6l4 4v8h-10z" fill="#fff" stroke="#666" stroke-width="0.8"/><rect x="12.5" y="13.5" width="9" height="7" fill="#eee" stroke="#666" stroke-width="0.8"/><path d="M12.5 17h9" stroke="#666" stroke-width="0.8"/></svg>
<div class="a" style="left:1672px;top:92px;width:1px;height:36px;background:#c0c8cc"></div>
<div class="t" style="left:1690px;top:88px;font-size:11px">Vendre</div>
<div class="a" style="left:1729px;top:88px;width:11px;height:11px;background:#fff;border:1px solid #b8c4ca"></div>
<div class="t" style="left:1732px;top:88px;font-size:10px;font-weight:700;color:#999;font-family:'Liberation Serif',serif">i</div>
<div class="a" style="left:1675px;top:103px;width:80px;height:28px;background:linear-gradient(#f05050,#d83838);border:1px solid #c03030;border-radius:2px"></div>
<div class="t" style="left:1679px;top:106px;font-size:21px;color:#fff"><span style="font-size:13px">1</span>6 669,<sup style="font-size:11px;vertical-align:9px">4</sup></div>
<div class="t" style="left:1771px;top:88px;font-size:11px">Acheter</div>
<div class="a" style="left:1812px;top:88px;width:11px;height:11px;background:#fff;border:1px solid #b8c4ca"></div>
<div class="t" style="left:1815px;top:88px;font-size:10px;font-weight:700;color:#999;font-family:'Liberation Serif',serif">i</div>
<div class="a" style="left:1758px;top:103px;width:80px;height:28px;background:linear-gradient(#40b040,#28a028);border:1px solid #28902a;border-radius:2px"></div>
<div class="t" style="left:1762px;top:106px;font-size:21px;color:#fff"><span style="font-size:13px">1</span>6 672,<sup style="font-size:11px;vertical-align:9px">2</sup></div>
<div class="a" style="left:1841px;top:92px;width:1px;height:36px;background:#c0c8cc"></div>
<div class="a" style="left:1851px;top:94px;width:12px;height:12px;background:#fff;border:1px solid #8a9aa2;border-radius:2px"></div>
<div class="t" style="left:1867px;top:94px;font-size:11px">L</div>
<div class="a" style="left:1878px;top:88px;width:19px;height:21px;background:#fff;border:1px solid #b8c2c8;border-radius:2px"></div>
<div class="t" style="left:1880px;top:93px;font-size:11px;color:#999">10</div>
<div class="t" style="left:1899px;top:92px;font-size:11px">pts</div>
<div class="a" style="left:1851px;top:117px;width:12px;height:12px;background:#fff;border:1px solid #8a9aa2;border-radius:2px"></div>
<div class="t" style="left:1867px;top:117px;font-size:11px">S</div>
<div class="a" style="left:1878px;top:111px;width:19px;height:21px;background:#fff;border:1px solid #b8c2c8;border-radius:2px"></div>
<div class="t" style="left:1880px;top:116px;font-size:11px;color:#999">10</div>
<div class="t" style="left:1899px;top:115px;font-size:11px">pts</div>

<div class="lg" style="left:0px;width:18px;padding:0"></div>
<svg class="a" style="left:3px;top:137px" width="11" height="11" viewBox="0 0 11 11"><rect x="0.5" y="0.5" width="10" height="10" fill="#fff" stroke="#b0b8bc"/><path d="M5.5 2v5M3 5l2.5 3 2.5-3" stroke="#e02020" stroke-width="1.8" fill="none"/><path d="M2 9h7" stroke="#e02020" stroke-width="1.2"/></svg>
<div class="lg" style="left:19px;width:19px;padding:0"></div>
<svg class="a" style="left:22px;top:137px" width="11" height="11" viewBox="0 0 11 11"><rect x="0.5" y="0.5" width="10" height="10" fill="#fff" stroke="#b0b8bc"/><path d="M5.5 9V4M3 6l2.5-3 2.5 3" stroke="#20a020" stroke-width="1.8" fill="none"/></svg>
<div class="lg" style="left:39px;width:38px"><span style="display:inline-block;width:5px;height:10px;background:#3aa0e0;vertical-align:-1px"></span><span style="display:inline-block;width:5px;height:10px;background:#f06060;vertical-align:-1px;margin-right:3px"></span>Prix</div>
<div class="lg" style="left:77px;width:73px"><span style="display:inline-block;width:10px;height:10px;background:#000;vertical-align:-1px;margin-right:3px"></span>Clôture (M)</div>
<div class="lg" style="left:150px;width:101px"><span class="cb"></span>Points pivots (M)</div>
<div class="lg" style="left:251px;width:99px"><span class="cb"></span>Points pivots (S)</div>
<div class="lg" style="left:350px;width:97px"><span class="cb"></span>Points pivots (J)</div>
<div class="lg" style="left:447px;width:104px"><span class="cb"></span>Points pivots (4h)</div>
<div class="lg" style="left:551px;width:91px"><span class="cb"></span>Prix médian (J)</div>
<div class="lg" style="left:642px;width:80px"><span class="cb"></span>Plus Haut (J)</div>
<div class="lg" style="left:722px;width:79px"><span class="cb"></span>Plus Bas (J)</div>
<div class="lg" style="left:801px;width:106px"><span class="cb"></span>Plus Haut (M, Pré)</div>
<div class="lg" style="left:907px;width:103px"><span class="cb"></span>Plus Bas (M, Pré)</div>
<div class="lg" style="left:1010px;width:105px"><span class="cb"></span>Plus Haut (S, Pré)</div>
<div class="lg" style="left:1115px;width:102px"><span class="cb"></span>Plus Bas (S, Pré)</div>
<div class="lg" style="left:1217px;width:109px"><span class="cb"></span>SuperTrend (3 10)</div>
<div class="a" style="left:0;top:150px;width:180px;height:18px;background:#fff;border:1px solid #a8b4bb"></div>
<div class="t" style="left:3px;top:153px;font-size:10.8px">Jour :+Haut 16 701,8 +Bas 16 659,8</div>
<!-- CHART -->
<svg class="a" style="left:0;top:133px" width="1919" height="884" viewBox="0 133 1919 884">
<rect x="224" y="195" width="1629" height="168" fill="#ffdfee"/>
<rect x="0" y="836" width="1853" height="162" fill="#cdeafb"/>
<line x1="224" y1="195.5" x2="1853" y2="195.5" stroke="#000" stroke-width="1"/>
<line x1="224" y1="363.5" x2="1853" y2="363.5" stroke="#000" stroke-width="1"/>
<line x1="224.5" y1="195" x2="224.5" y2="362" stroke="#000" stroke-width="1"/>
<line x1="224" y1="279.5" x2="1853" y2="279.5" stroke="#1e0c88" stroke-width="1" stroke-dasharray="12 12"/>
<line x1="0" y1="406" x2="1853" y2="406" stroke="#4c0c72" stroke-width="2"/>
<line x1="224" y1="426" x2="1853" y2="426" stroke="#3e9a3e" stroke-width="2" stroke-dasharray="21 9"/>
<line x1="224" y1="494.5" x2="1853" y2="494.5" stroke="#4aa84a" stroke-width="1" stroke-dasharray="20 8"/>
<line x1="0" y1="577" x2="1853" y2="577" stroke="#42aae0" stroke-width="2"/>
<line x1="0" y1="694.5" x2="1853" y2="694.5" stroke="#4aa84a" stroke-width="1" stroke-dasharray="20 8"/>
<line x1="0" y1="767" x2="1853" y2="767" stroke="#36a436" stroke-width="2" stroke-dasharray="21 9"/>
<line x1="0" y1="796" x2="1853" y2="796" stroke="#5aaad4" stroke-width="2"/>
<line x1="0" y1="836.5" x2="1853" y2="836.5" stroke="#000" stroke-width="1"/>
<line x1="0" y1="926.5" x2="1853" y2="926.5" stroke="#0c1a88" stroke-width="1" stroke-dasharray="12 12"/>
<line x1="0" y1="946.5" x2="1853" y2="946.5" stroke="#000" stroke-width="1" stroke-dasharray="4 4"/>
<ellipse cx="896" cy="363.5" rx="32" ry="21" fill="rgba(246,150,100,0.25)" stroke="#f08a4a" stroke-width="1"/>
<ellipse cx="1286" cy="428.5" rx="15.5" ry="16.3" fill="rgba(246,150,100,0.25)" stroke="#f08a4a" stroke-width="1"/>
<ellipse cx="1466" cy="422" rx="32" ry="16" fill="rgba(246,150,100,0.25)" stroke="#f08a4a" stroke-width="1"/>
<line x1="5.5" y1="509" x2="5.5" y2="681" stroke="#b83c3c" stroke-width="1"/>
<rect x="3.5" y="526.5" width="4" height="47" fill="#f86a6a" stroke="#b83c3c" stroke-width="1"/>
<line x1="13.5" y1="509" x2="13.5" y2="615" stroke="#b83c3c" stroke-width="1"/>
<rect x="11.5" y="573.5" width="4" height="33" fill="#f86a6a" stroke="#b83c3c" stroke-width="1"/>
<line x1="21.5" y1="519" x2="21.5" y2="604" stroke="#135a84" stroke-width="1"/>
<rect x="19.5" y="546.5" width="4" height="57" fill="#1e94d0" stroke="#135a84" stroke-width="1"/>
<line x1="28.5" y1="499" x2="28.5" y2="574" stroke="#b83c3c" stroke-width="1"/>
<rect x="26.5" y="546.5" width="4" height="10" fill="#f86a6a" stroke="#b83c3c" stroke-width="1"/>
<line x1="36.5" y1="533" x2="36.5" y2="601" stroke="#b83c3c" stroke-width="1"/>
<rect x="34.5" y="553.5" width="4" height="47" fill="#f86a6a" stroke="#b83c3c" stroke-width="1"/>
<line x1="44.5" y1="459" x2="44.5" y2="635" stroke="#135a84" stroke-width="1"/>
<rect x="42.5" y="472.5" width="4" height="124" fill="#1e94d0" stroke="#135a84" stroke-width="1"/>
<line x1="52.5" y1="459" x2="52.5" y2="500" stroke="#b83c3c" stroke-width="1"/>
<rect x="50.5" y="476.5" width="4" height="6" fill="#f86a6a" stroke="#b83c3c" stroke-width="1"/>
<line x1="60.5" y1="392" x2="60.5" y2="494" stroke="#135a84" stroke-width="1"/>
<rect x="58.5" y="436.5" width="4" height="50" fill="#1e94d0" stroke="#135a84" stroke-width="1"/>
<line x1="67.5" y1="419" x2="67.5" y2="514" stroke="#b83c3c" stroke-width="1"/>
<rect x="65.5" y="432.5" width="4" height="81" fill="#f86a6a" stroke="#b83c3c" stroke-width="1"/>
<line x1="75.5" y1="513" x2="75.5" y2="608" stroke="#b83c3c" stroke-width="1"/>
<rect x="73.5" y="513.5" width="4" height="60" fill="#f86a6a" stroke="#b83c3c" stroke-width="1"/>
<line x1="83.5" y1="426" x2="83.5" y2="585" stroke="#135a84" stroke-width="1"/>
<rect x="81.5" y="543.5" width="4" height="33" fill="#1e94d0" stroke="#135a84" stroke-width="1"/>
<line x1="91.5" y1="450" x2="91.5" y2="585" stroke="#135a84" stroke-width="1"/>
<rect x="89.5" y="473.5" width="4" height="70" fill="#1e94d0" stroke="#135a84" stroke-width="1"/>
<line x1="99.5" y1="376" x2="99.5" y2="492" stroke="#b83c3c" stroke-width="1"/>
<rect x="97.5" y="476.5" width="4" height="15" fill="#f86a6a" stroke="#b83c3c" stroke-width="1"/>
<line x1="107.5" y1="450" x2="107.5" y2="606" stroke="#b83c3c" stroke-width="1"/>
<rect x="105.5" y="490.5" width="4" height="77" fill="#f86a6a" stroke="#b83c3c" stroke-width="1"/>
<line x1="114.5" y1="466" x2="114.5" y2="618" stroke="#135a84" stroke-width="1"/>
<rect x="112.5" y="480.5" width="4" height="83" fill="#1e94d0" stroke="#135a84" stroke-width="1"/>
<line x1="122.5" y1="430" x2="122.5" y2="558" stroke="#b83c3c" stroke-width="1"/>
<rect x="120.5" y="477.5" width="4" height="40" fill="#f86a6a" stroke="#b83c3c" stroke-width="1"/>
<line x1="130.5" y1="403" x2="130.5" y2="514" stroke="#135a84" stroke-width="1"/>
<rect x="128.5" y="453.5" width="4" height="60" fill="#1e94d0" stroke="#135a84" stroke-width="1"/>
<line x1="138.5" y1="349" x2="138.5" y2="454" stroke="#135a84" stroke-width="1"/>
<rect x="136.5" y="409.5" width="4" height="42" fill="#1e94d0" stroke="#135a84" stroke-width="1"/>
<line x1="146.5" y1="393" x2="146.5" y2="498" stroke="#135a84" stroke-width="1"/>
<rect x="144.5" y="407.5" width="4" height="2" fill="#1e94d0" stroke="#135a84" stroke-width="1"/>
<line x1="153.5" y1="399" x2="153.5" y2="524" stroke="#b83c3c" stroke-width="1"/>
<rect x="151.5" y="409.5" width="4" height="108" fill="#f86a6a" stroke="#b83c3c" stroke-width="1"/>
<line x1="161.5" y1="473" x2="161.5" y2="539" stroke="#b83c3c" stroke-width="1"/>
<rect x="159.5" y="510.5" width="4" height="18" fill="#f86a6a" stroke="#b83c3c" stroke-width="1"/>
<line x1="169.5" y1="316" x2="169.5" y2="532" stroke="#135a84" stroke-width="1"/>
<rect x="167.5" y="356.5" width="4" height="175" fill="#1e94d0" stroke="#135a84" stroke-width="1"/>
<line x1="177.5" y1="349" x2="177.5" y2="410" stroke="#b83c3c" stroke-width="1"/>
<rect x="175.5" y="353.5" width="4" height="16" fill="#f86a6a" stroke="#b83c3c" stroke-width="1"/>
<line x1="185.5" y1="342" x2="185.5" y2="398" stroke="#b83c3c" stroke-width="1"/>
<rect x="183.5" y="363.5" width="4" height="13" fill="#f86a6a" stroke="#b83c3c" stroke-width="1"/>
<line x1="192.5" y1="336" x2="192.5" y2="385" stroke="#135a84" stroke-width="1"/>
<rect x="190.5" y="356.5" width="4" height="23" fill="#1e94d0" stroke="#135a84" stroke-width="1"/>
<line x1="200.5" y1="342" x2="200.5" y2="391" stroke="#b83c3c" stroke-width="1"/>
<rect x="198.5" y="356.5" width="4" height="23" fill="#f86a6a" stroke="#b83c3c" stroke-width="1"/>
<line x1="208.5" y1="269" x2="208.5" y2="388" stroke="#135a84" stroke-width="1"/>
<rect x="206.5" y="282.5" width="4" height="94" fill="#1e94d0" stroke="#135a84" stroke-width="1"/>
<line x1="216.5" y1="269" x2="216.5" y2="331" stroke="#b83c3c" stroke-width="1"/>
<rect x="214.5" y="279.5" width="4" height="41" fill="#f86a6a" stroke="#b83c3c" stroke-width="1"/>
<line x1="224.5" y1="229" x2="224.5" y2="317" stroke="#135a84" stroke-width="1"/>
<rect x="222.5" y="229.5" width="4" height="87" fill="#1e94d0" stroke="#135a84" stroke-width="1"/>
<line x1="231.5" y1="225" x2="231.5" y2="374" stroke="#b83c3c" stroke-width="1"/>
<rect x="229.5" y="225.5" width="4" height="138" fill="#f86a6a" stroke="#b83c3c" stroke-width="1"/>
<line x1="239.5" y1="276" x2="239.5" y2="378" stroke="#135a84" stroke-width="1"/>
<rect x="237.5" y="289.5" width="4" height="71" fill="#1e94d0" stroke="#135a84" stroke-width="1"/>
<line x1="247.5" y1="282" x2="247.5" y2="358" stroke="#b83c3c" stroke-width="1"/>
<rect x="245.5" y="289.5" width="4" height="44" fill="#f86a6a" stroke="#b83c3c" stroke-width="1"/>
<line x1="255.5" y1="289" x2="255.5" y2="358" stroke="#135a84" stroke-width="1"/>
<rect x="253.5" y="292.5" width="4" height="38" fill="#1e94d0" stroke="#135a84" stroke-width="1"/>
<line x1="263.5" y1="252" x2="263.5" y2="313" stroke="#135a84" stroke-width="1"/>
<rect x="261.5" y="272.5" width="4" height="17" fill="#1e94d0" stroke="#135a84" stroke-width="1"/>
<line x1="271.5" y1="270" x2="271.5" y2="404" stroke="#b83c3c" stroke-width="1"/>
<rect x="269.5" y="272.5" width="4" height="125" fill="#f86a6a" stroke="#b83c3c" stroke-width="1"/>
<line x1="278.5" y1="259" x2="278.5" y2="410" stroke="#135a84" stroke-width="1"/>
<rect x="276.5" y="306.5" width="4" height="91" fill="#1e94d0" stroke="#135a84" stroke-width="1"/>
<line x1="286.5" y1="279" x2="286.5" y2="344" stroke="#135a84" stroke-width="1"/>
<rect x="284.5" y="292.5" width="4" height="18" fill="#1e94d0" stroke="#135a84" stroke-width="1"/>
<line x1="294.5" y1="289" x2="294.5" y2="324" stroke="#b83c3c" stroke-width="1"/>
<rect x="292.5" y="296.5" width="4" height="16" fill="#f86a6a" stroke="#b83c3c" stroke-width="1"/>
<line x1="302.5" y1="302" x2="302.5" y2="385" stroke="#b83c3c" stroke-width="1"/>
<rect x="300.5" y="309.5" width="4" height="75" fill="#f86a6a" stroke="#b83c3c" stroke-width="1"/>
<line x1="310.5" y1="349" x2="310.5" y2="398" stroke="#135a84" stroke-width="1"/>
<rect x="308.5" y="357.5" width="4" height="27" fill="#1e94d0" stroke="#135a84" stroke-width="1"/>
<line x1="317.5" y1="336" x2="317.5" y2="438" stroke="#b83c3c" stroke-width="1"/>
<rect x="315.5" y="349.5" width="4" height="74" fill="#f86a6a" stroke="#b83c3c" stroke-width="1"/>
<line x1="325.5" y1="396" x2="325.5" y2="435" stroke="#135a84" stroke-width="1"/>
<rect x="323.5" y="416.5" width="4" height="7" fill="#1e94d0" stroke="#135a84" stroke-width="1"/>
<line x1="333.5" y1="369" x2="333.5" y2="421" stroke="#135a84" stroke-width="1"/>
<rect x="331.5" y="409.5" width="4" height="8" fill="#1e94d0" stroke="#135a84" stroke-width="1"/>
<line x1="341.5" y1="369" x2="341.5" y2="421" stroke="#135a84" stroke-width="1"/>
<rect x="339.5" y="373.5" width="4" height="41" fill="#1e94d0" stroke="#135a84" stroke-width="1"/>
<line x1="349.5" y1="359" x2="349.5" y2="398" stroke="#135a84" stroke-width="1"/>
<rect x="347.5" y="359.5" width="4" height="10" fill="#1e94d0" stroke="#135a84" stroke-width="1"/>
<line x1="356.5" y1="342" x2="356.5" y2="381" stroke="#135a84" stroke-width="1"/>
<rect x="354.5" y="359.5" width="4" height="4" fill="#1e94d0" stroke="#135a84" stroke-width="1"/>
<line x1="364.5" y1="346" x2="364.5" y2="391" stroke="#b83c3c" stroke-width="1"/>
<rect x="362.5" y="357.5" width="4" height="6" fill="#f86a6a" stroke="#b83c3c" stroke-width="1"/>
<line x1="372.5" y1="364" x2="372.5" y2="415" stroke="#b83c3c" stroke-width="1"/>
<rect x="370.5" y="366.5" width="4" height="24" fill="#f86a6a" stroke="#b83c3c" stroke-width="1"/>
<line x1="380.5" y1="389" x2="380.5" y2="432" stroke="#b83c3c" stroke-width="1"/>
<rect x="378.5" y="389.5" width="4" height="11" fill="#f86a6a" stroke="#b83c3c" stroke-width="1"/>
<line x1="388.5" y1="384" x2="388.5" y2="448" stroke="#135a84" stroke-width="1"/>
<rect x="386.5" y="389.5" width="4" height="7" fill="#1e94d0" stroke="#135a84" stroke-width="1"/>
<line x1="396.5" y1="376" x2="396.5" y2="432" stroke="#b83c3c" stroke-width="1"/>
<rect x="394.5" y="389.5" width="4" height="37" fill="#f86a6a" stroke="#b83c3c" stroke-width="1"/>
<line x1="403.5" y1="409" x2="403.5" y2="448" stroke="#b83c3c" stroke-width="1"/>
<rect x="401.5" y="423.5" width="4" height="21" fill="#f86a6a" stroke="#b83c3c" stroke-width="1"/>
<line x1="411.5" y1="416" x2="411.5" y2="461" stroke="#135a84" stroke-width="1"/>
<rect x="409.5" y="431.5" width="4" height="16" fill="#1e94d0" stroke="#135a84" stroke-width="1"/>
<line x1="419.5" y1="389" x2="419.5" y2="435" stroke="#135a84" stroke-width="1"/>
<rect x="417.5" y="419.5" width="4" height="7" fill="#1e94d0" stroke="#135a84" stroke-width="1"/>
<line x1="427.5" y1="403" x2="427.5" y2="445" stroke="#135a84" stroke-width="1"/>
<rect x="425.5" y="403.5" width="4" height="20" fill="#1e94d0" stroke="#135a84" stroke-width="1"/>
<line x1="435.5" y1="403" x2="435.5" y2="438" stroke="#b83c3c" stroke-width="1"/>
<rect x="433.5" y="407.5" width="4" height="10" fill="#f86a6a" stroke="#b83c3c" stroke-width="1"/>
<line x1="442.5" y1="356" x2="442.5" y2="424" stroke="#135a84" stroke-width="1"/>
<rect x="440.5" y="376.5" width="4" height="47" fill="#1e94d0" stroke="#135a84" stroke-width="1"/>
<line x1="450.5" y1="356" x2="450.5" y2="404" stroke="#b83c3c" stroke-width="1"/>
<rect x="448.5" y="373.5" width="4" height="20" fill="#f86a6a" stroke="#b83c3c" stroke-width="1"/>
<line x1="458.5" y1="369" x2="458.5" y2="415" stroke="#135a84" stroke-width="1"/>
<rect x="456.5" y="389.5" width="4" height="1" fill="#1e94d0" stroke="#135a84" stroke-width="1"/>
<line x1="466.5" y1="389" x2="466.5" y2="491" stroke="#b83c3c" stroke-width="1"/>
<rect x="464.5" y="393.5" width="4" height="90" fill="#f86a6a" stroke="#b83c3c" stroke-width="1"/>
<line x1="474.5" y1="477" x2="474.5" y2="558" stroke="#b83c3c" stroke-width="1"/>
<rect x="472.5" y="490.5" width="4" height="67" fill="#f86a6a" stroke="#b83c3c" stroke-width="1"/>
<line x1="481.5" y1="523" x2="481.5" y2="581" stroke="#135a84" stroke-width="1"/>
<rect x="479.5" y="530.5" width="4" height="23" fill="#1e94d0" stroke="#135a84" stroke-width="1"/>
<line x1="489.5" y1="483" x2="489.5" y2="552" stroke="#b83c3c" stroke-width="1"/>
<rect x="487.5" y="527.5" width="4" height="4" fill="#f86a6a" stroke="#b83c3c" stroke-width="1"/>
<line x1="497.5" y1="513" x2="497.5" y2="569" stroke="#b83c3c" stroke-width="1"/>
<rect x="495.5" y="527.5" width="4" height="30" fill="#f86a6a" stroke="#b83c3c" stroke-width="1"/>
<line x1="505.5" y1="543" x2="505.5" y2="592" stroke="#135a84" stroke-width="1"/>
<rect x="503.5" y="557.5" width="4" height="4" fill="#1e94d0" stroke="#135a84" stroke-width="1"/>
<line x1="513.5" y1="543" x2="513.5" y2="584" stroke="#135a84" stroke-width="1"/>
<rect x="511.5" y="562.5" width="4" height="1" fill="#1e94d0" stroke="#135a84" stroke-width="1"/>
<line x1="520.5" y1="527" x2="520.5" y2="577" stroke="#135a84" stroke-width="1"/>
<rect x="518.5" y="543.5" width="4" height="18" fill="#1e94d0" stroke="#135a84" stroke-width="1"/>
<line x1="528.5" y1="496" x2="528.5" y2="552" stroke="#135a84" stroke-width="1"/>
<rect x="526.5" y="517.5" width="4" height="31" fill="#1e94d0" stroke="#135a84" stroke-width="1"/>
<line x1="536.5" y1="517" x2="536.5" y2="544" stroke="#b83c3c" stroke-width="1"/>
<rect x="534.5" y="520.5" width="4" height="17" fill="#f86a6a" stroke="#b83c3c" stroke-width="1"/>
<line x1="544.5" y1="531" x2="544.5" y2="592" stroke="#b83c3c" stroke-width="1"/>
<rect x="542.5" y="533.5" width="4" height="58" fill="#f86a6a" stroke="#b83c3c" stroke-width="1"/>
<line x1="552.5" y1="530" x2="552.5" y2="592" stroke="#135a84" stroke-width="1"/>
<rect x="550.5" y="537.5" width="4" height="50" fill="#1e94d0" stroke="#135a84" stroke-width="1"/>
<line x1="560.5" y1="503" x2="560.5" y2="538" stroke="#135a84" stroke-width="1"/>
<rect x="558.5" y="510.5" width="4" height="23" fill="#1e94d0" stroke="#135a84" stroke-width="1"/>
<line x1="567.5" y1="483" x2="567.5" y2="525" stroke="#135a84" stroke-width="1"/>
<rect x="565.5" y="506.5" width="4" height="1" fill="#1e94d0" stroke="#135a84" stroke-width="1"/>
<line x1="575.5" y1="500" x2="575.5" y2="565" stroke="#b83c3c" stroke-width="1"/>
<rect x="573.5" y="510.5" width="4" height="51" fill="#f86a6a" stroke="#b83c3c" stroke-width="1"/>
<line x1="583.5" y1="550" x2="583.5" y2="605" stroke="#b83c3c" stroke-width="1"/>
<rect x="581.5" y="557.5" width="4" height="40" fill="#f86a6a" stroke="#b83c3c" stroke-width="1"/>
<line x1="591.5" y1="591" x2="591.5" y2="652" stroke="#b83c3c" stroke-width="1"/>
<rect x="589.5" y="594.5" width="4" height="30" fill="#f86a6a" stroke="#b83c3c" stroke-width="1"/>
<line x1="599.5" y1="594" x2="599.5" y2="632" stroke="#b83c3c" stroke-width="1"/>
<rect x="597.5" y="617.5" width="4" height="7" fill="#f86a6a" stroke="#b83c3c" stroke-width="1"/>
<line x1="606.5" y1="624" x2="606.5" y2="672" stroke="#b83c3c" stroke-width="1"/>
<rect x="604.5" y="627.5" width="4" height="37" fill="#f86a6a" stroke="#b83c3c" stroke-width="1"/>
<line x1="614.5" y1="617" x2="614.5" y2="662" stroke="#135a84" stroke-width="1"/>
<rect x="612.5" y="630.5" width="4" height="31" fill="#1e94d0" stroke="#135a84" stroke-width="1"/>
<line x1="622.5" y1="611" x2="622.5" y2="638" stroke="#135a84" stroke-width="1"/>
<rect x="620.5" y="614.5" width="4" height="14" fill="#1e94d0" stroke="#135a84" stroke-width="1"/>
<line x1="630.5" y1="587" x2="630.5" y2="621" stroke="#135a84" stroke-width="1"/>
<rect x="628.5" y="597.5" width="4" height="20" fill="#1e94d0" stroke="#135a84" stroke-width="1"/>
<line x1="638.5" y1="570" x2="638.5" y2="601" stroke="#135a84" stroke-width="1"/>
<rect x="636.5" y="597.5" width="4" height="1" fill="#1e94d0" stroke="#135a84" stroke-width="1"/>
<line x1="645.5" y1="578" x2="645.5" y2="619" stroke="#b83c3c" stroke-width="1"/>
<rect x="643.5" y="594.5" width="4" height="14" fill="#f86a6a" stroke="#b83c3c" stroke-width="1"/>
<line x1="653.5" y1="608" x2="653.5" y2="652" stroke="#b83c3c" stroke-width="1"/>
<rect x="651.5" y="610.5" width="4" height="14" fill="#f86a6a" stroke="#b83c3c" stroke-width="1"/>
<line x1="661.5" y1="617" x2="661.5" y2="645" stroke="#b83c3c" stroke-width="1"/>
<rect x="659.5" y="627.5" width="4" height="4" fill="#f86a6a" stroke="#b83c3c" stroke-width="1"/>
<line x1="669.5" y1="624" x2="669.5" y2="645" stroke="#b83c3c" stroke-width="1"/>
<rect x="667.5" y="624.5" width="4" height="7" fill="#f86a6a" stroke="#b83c3c" stroke-width="1"/>
<line x1="677.5" y1="493" x2="677.5" y2="628" stroke="#135a84" stroke-width="1"/>
<rect x="675.5" y="503.5" width="4" height="124" fill="#1e94d0" stroke="#135a84" stroke-width="1"/>
<line x1="684.5" y1="493" x2="684.5" y2="601" stroke="#b83c3c" stroke-width="1"/>
<rect x="682.5" y="500.5" width="4" height="100" fill="#f86a6a" stroke="#b83c3c" stroke-width="1"/>
<line x1="692.5" y1="511" x2="692.5" y2="628" stroke="#135a84" stroke-width="1"/>
<rect x="690.5" y="560.5" width="4" height="46" fill="#1e94d0" stroke="#135a84" stroke-width="1"/>
<line x1="700.5" y1="519" x2="700.5" y2="597" stroke="#135a84" stroke-width="1"/>
<rect x="698.5" y="525.5" width="4" height="47" fill="#1e94d0" stroke="#135a84" stroke-width="1"/>
<line x1="708.5" y1="471" x2="708.5" y2="526" stroke="#135a84" stroke-width="1"/>
<rect x="706.5" y="507.5" width="4" height="18" fill="#1e94d0" stroke="#135a84" stroke-width="1"/>
<line x1="716.5" y1="491" x2="716.5" y2="532" stroke="#b83c3c" stroke-width="1"/>
<rect x="714.5" y="501.5" width="4" height="12" fill="#f86a6a" stroke="#b83c3c" stroke-width="1"/>
<line x1="724.5" y1="501" x2="724.5" y2="528" stroke="#135a84" stroke-width="1"/>
<rect x="722.5" y="509.5" width="4" height="2" fill="#1e94d0" stroke="#135a84" stroke-width="1"/>
<line x1="731.5" y1="488" x2="731.5" y2="511" stroke="#135a84" stroke-width="1"/>
<rect x="729.5" y="498.5" width="4" height="8" fill="#1e94d0" stroke="#135a84" stroke-width="1"/>
<line x1="739.5" y1="486" x2="739.5" y2="522" stroke="#b83c3c" stroke-width="1"/>
<rect x="737.5" y="500.5" width="4" height="15" fill="#f86a6a" stroke="#b83c3c" stroke-width="1"/>
<line x1="747.5" y1="510" x2="747.5" y2="540" stroke="#b83c3c" stroke-width="1"/>
<rect x="745.5" y="517.5" width="4" height="9" fill="#f86a6a" stroke="#b83c3c" stroke-width="1"/>
<line x1="755.5" y1="526" x2="755.5" y2="540" stroke="#b83c3c" stroke-width="1"/>
<rect x="753.5" y="532.5" width="4" height="4" fill="#f86a6a" stroke="#b83c3c" stroke-width="1"/>
<line x1="763.5" y1="535" x2="763.5" y2="549" stroke="#135a84" stroke-width="1"/>
<rect x="761.5" y="541.5" width="4" height="1" fill="#1e94d0" stroke="#135a84" stroke-width="1"/>
<line x1="770.5" y1="530" x2="770.5" y2="542" stroke="#135a84" stroke-width="1"/>
<rect x="768.5" y="531.5" width="4" height="5" fill="#1e94d0" stroke="#135a84" stroke-width="1"/>
<line x1="778.5" y1="536" x2="778.5" y2="571" stroke="#b83c3c" stroke-width="1"/>
<rect x="776.5" y="542.5" width="4" height="21" fill="#f86a6a" stroke="#b83c3c" stroke-width="1"/>
<line x1="786.5" y1="463" x2="786.5" y2="531" stroke="#135a84" stroke-width="1"/>
<rect x="784.5" y="488.5" width="4" height="7" fill="#1e94d0" stroke="#135a84" stroke-width="1"/>
<line x1="794.5" y1="476" x2="794.5" y2="502" stroke="#b83c3c" stroke-width="1"/>
<rect x="792.5" y="482.5" width="4" height="2" fill="#f86a6a" stroke="#b83c3c" stroke-width="1"/>
<line x1="802.5" y1="486" x2="802.5" y2="513" stroke="#b83c3c" stroke-width="1"/>
<rect x="800.5" y="486.5" width="4" height="20" fill="#f86a6a" stroke="#b83c3c" stroke-width="1"/>
<line x1="809.5" y1="495" x2="809.5" y2="516" stroke="#135a84" stroke-width="1"/>
<rect x="807.5" y="497.5" width="4" height="13" fill="#1e94d0" stroke="#135a84" stroke-width="1"/>
<line x1="817.5" y1="497" x2="817.5" y2="540" stroke="#b83c3c" stroke-width="1"/>
<rect x="815.5" y="500.5" width="4" height="39" fill="#f86a6a" stroke="#b83c3c" stroke-width="1"/>
<line x1="825.5" y1="521" x2="825.5" y2="546" stroke="#135a84" stroke-width="1"/>
<rect x="823.5" y="527.5" width="4" height="10" fill="#1e94d0" stroke="#135a84" stroke-width="1"/>
<line x1="833.5" y1="496" x2="833.5" y2="528" stroke="#135a84" stroke-width="1"/>
<rect x="831.5" y="497.5" width="4" height="27" fill="#1e94d0" stroke="#135a84" stroke-width="1"/>
<line x1="841.5" y1="465" x2="841.5" y2="495" stroke="#135a84" stroke-width="1"/>
<rect x="839.5" y="477.5" width="4" height="17" fill="#1e94d0" stroke="#135a84" stroke-width="1"/>
<line x1="848.5" y1="470" x2="848.5" y2="489" stroke="#135a84" stroke-width="1"/>
<rect x="846.5" y="471.5" width="4" height="8" fill="#1e94d0" stroke="#135a84" stroke-width="1"/>
<line x1="856.5" y1="458" x2="856.5" y2="483" stroke="#135a84" stroke-width="1"/>
<rect x="854.5" y="463.5" width="4" height="14" fill="#1e94d0" stroke="#135a84" stroke-width="1"/>
<line x1="864.5" y1="434" x2="864.5" y2="459" stroke="#135a84" stroke-width="1"/>
<rect x="862.5" y="450.5" width="4" height="8" fill="#1e94d0" stroke="#135a84" stroke-width="1"/>
<line x1="872.5" y1="423" x2="872.5" y2="452" stroke="#135a84" stroke-width="1"/>
<rect x="870.5" y="424.5" width="4" height="20" fill="#1e94d0" stroke="#135a84" stroke-width="1"/>
<line x1="880.5" y1="383" x2="880.5" y2="434" stroke="#135a84" stroke-width="1"/>
<rect x="878.5" y="388.5" width="4" height="42" fill="#1e94d0" stroke="#135a84" stroke-width="1"/>
<line x1="888.5" y1="350" x2="888.5" y2="401" stroke="#135a84" stroke-width="1"/>
<rect x="886.5" y="357.5" width="4" height="28" fill="#1e94d0" stroke="#135a84" stroke-width="1"/>
<line x1="895.5" y1="357" x2="895.5" y2="385" stroke="#b83c3c" stroke-width="1"/>
<rect x="893.5" y="364.5" width="4" height="13" fill="#f86a6a" stroke="#b83c3c" stroke-width="1"/>
<line x1="903.5" y1="371" x2="903.5" y2="479" stroke="#b83c3c" stroke-width="1"/>
<rect x="901.5" y="374.5" width="4" height="94" fill="#f86a6a" stroke="#b83c3c" stroke-width="1"/>
<line x1="911.5" y1="438" x2="911.5" y2="466" stroke="#135a84" stroke-width="1"/>
<rect x="909.5" y="438.5" width="4" height="27" fill="#1e94d0" stroke="#135a84" stroke-width="1"/>
<line x1="919.5" y1="414" x2="919.5" y2="463" stroke="#b83c3c" stroke-width="1"/>
<rect x="917.5" y="442.5" width="4" height="6" fill="#f86a6a" stroke="#b83c3c" stroke-width="1"/>
<line x1="927.5" y1="448" x2="927.5" y2="475" stroke="#b83c3c" stroke-width="1"/>
<rect x="925.5" y="451.5" width="4" height="23" fill="#f86a6a" stroke="#b83c3c" stroke-width="1"/>
<line x1="934.5" y1="458" x2="934.5" y2="509" stroke="#135a84" stroke-width="1"/>
<rect x="932.5" y="464.5" width="4" height="8" fill="#1e94d0" stroke="#135a84" stroke-width="1"/>
<line x1="942.5" y1="458" x2="942.5" y2="480" stroke="#135a84" stroke-width="1"/>
<rect x="940.5" y="461.5" width="4" height="1" fill="#1e94d0" stroke="#135a84" stroke-width="1"/>
<line x1="950.5" y1="461" x2="950.5" y2="496" stroke="#b83c3c" stroke-width="1"/>
<rect x="948.5" y="464.5" width="4" height="25" fill="#f86a6a" stroke="#b83c3c" stroke-width="1"/>
<line x1="958.5" y1="488" x2="958.5" y2="506" stroke="#135a84" stroke-width="1"/>
<rect x="956.5" y="489.5" width="4" height="3" fill="#1e94d0" stroke="#135a84" stroke-width="1"/>
<line x1="966.5" y1="481" x2="966.5" y2="500" stroke="#b83c3c" stroke-width="1"/>
<rect x="964.5" y="484.5" width="4" height="10" fill="#f86a6a" stroke="#b83c3c" stroke-width="1"/>
<line x1="973.5" y1="484" x2="973.5" y2="523" stroke="#b83c3c" stroke-width="1"/>
<rect x="971.5" y="494.5" width="4" height="5" fill="#f86a6a" stroke="#b83c3c" stroke-width="1"/>
<line x1="981.5" y1="498" x2="981.5" y2="557" stroke="#b83c3c" stroke-width="1"/>
<rect x="979.5" y="501.5" width="4" height="47" fill="#f86a6a" stroke="#b83c3c" stroke-width="1"/>
<line x1="989.5" y1="511" x2="989.5" y2="560" stroke="#135a84" stroke-width="1"/>
<rect x="987.5" y="515.5" width="4" height="37" fill="#1e94d0" stroke="#135a84" stroke-width="1"/>
<line x1="997.5" y1="518" x2="997.5" y2="543" stroke="#b83c3c" stroke-width="1"/>
<rect x="995.5" y="518.5" width="4" height="10" fill="#f86a6a" stroke="#b83c3c" stroke-width="1"/>
<line x1="1005.5" y1="515" x2="1005.5" y2="543" stroke="#b83c3c" stroke-width="1"/>
<rect x="1003.5" y="525.5" width="4" height="17" fill="#f86a6a" stroke="#b83c3c" stroke-width="1"/>
<line x1="1012.5" y1="535" x2="1012.5" y2="580" stroke="#b83c3c" stroke-width="1"/>
<rect x="1010.5" y="538.5" width="4" height="34" fill="#f86a6a" stroke="#b83c3c" stroke-width="1"/>
<line x1="1020.5" y1="551" x2="1020.5" y2="590" stroke="#135a84" stroke-width="1"/>
<rect x="1018.5" y="555.5" width="4" height="14" fill="#1e94d0" stroke="#135a84" stroke-width="1"/>
<line x1="1028.5" y1="551" x2="1028.5" y2="583" stroke="#b83c3c" stroke-width="1"/>
<rect x="1026.5" y="551.5" width="4" height="25" fill="#f86a6a" stroke="#b83c3c" stroke-width="1"/>
<line x1="1036.5" y1="581" x2="1036.5" y2="619" stroke="#b83c3c" stroke-width="1"/>
<rect x="1034.5" y="581.5" width="4" height="18" fill="#f86a6a" stroke="#b83c3c" stroke-width="1"/>
<line x1="1044.5" y1="578" x2="1044.5" y2="644" stroke="#135a84" stroke-width="1"/>
<rect x="1042.5" y="578.5" width="4" height="17" fill="#1e94d0" stroke="#135a84" stroke-width="1"/>
<line x1="1052.5" y1="571" x2="1052.5" y2="600" stroke="#b83c3c" stroke-width="1"/>
<rect x="1050.5" y="581.5" width="4" height="8" fill="#f86a6a" stroke="#b83c3c" stroke-width="1"/>
<line x1="1059.5" y1="578" x2="1059.5" y2="607" stroke="#b83c3c" stroke-width="1"/>
<rect x="1057.5" y="592.5" width="4" height="3" fill="#f86a6a" stroke="#b83c3c" stroke-width="1"/>
<line x1="1067.5" y1="575" x2="1067.5" y2="604" stroke="#135a84" stroke-width="1"/>
<rect x="1065.5" y="581.5" width="4" height="11" fill="#1e94d0" stroke="#135a84" stroke-width="1"/>
<line x1="1075.5" y1="585" x2="1075.5" y2="607" stroke="#b83c3c" stroke-width="1"/>
<rect x="1073.5" y="585.5" width="4" height="21" fill="#f86a6a" stroke="#b83c3c" stroke-width="1"/>
<line x1="1083.5" y1="578" x2="1083.5" y2="616" stroke="#135a84" stroke-width="1"/>
<rect x="1081.5" y="578.5" width="4" height="31" fill="#1e94d0" stroke="#135a84" stroke-width="1"/>
<line x1="1091.5" y1="561" x2="1091.5" y2="590" stroke="#b83c3c" stroke-width="1"/>
<rect x="1089.5" y="581.5" width="4" height="5" fill="#f86a6a" stroke="#b83c3c" stroke-width="1"/>
<line x1="1098.5" y1="585" x2="1098.5" y2="596" stroke="#b83c3c" stroke-width="1"/>
<rect x="1096.5" y="585.5" width="4" height="4" fill="#f86a6a" stroke="#b83c3c" stroke-width="1"/>
<line x1="1106.5" y1="578" x2="1106.5" y2="596" stroke="#135a84" stroke-width="1"/>
<rect x="1104.5" y="581.5" width="4" height="11" fill="#1e94d0" stroke="#135a84" stroke-width="1"/>
<line x1="1114.5" y1="558" x2="1114.5" y2="596" stroke="#135a84" stroke-width="1"/>
<rect x="1112.5" y="569.5" width="4" height="17" fill="#1e94d0" stroke="#135a84" stroke-width="1"/>
<line x1="1122.5" y1="565" x2="1122.5" y2="590" stroke="#b83c3c" stroke-width="1"/>
<rect x="1120.5" y="565.5" width="4" height="13" fill="#f86a6a" stroke="#b83c3c" stroke-width="1"/>
<line x1="1130.5" y1="578" x2="1130.5" y2="596" stroke="#b83c3c" stroke-width="1"/>
<rect x="1128.5" y="581.5" width="4" height="8" fill="#f86a6a" stroke="#b83c3c" stroke-width="1"/>
<line x1="1137.5" y1="578" x2="1137.5" y2="593" stroke="#135a84" stroke-width="1"/>
<rect x="1135.5" y="578.5" width="4" height="14" fill="#1e94d0" stroke="#135a84" stroke-width="1"/>
<line x1="1145.5" y1="561" x2="1145.5" y2="586" stroke="#135a84" stroke-width="1"/>
<rect x="1143.5" y="576.5" width="4" height="5" fill="#1e94d0" stroke="#135a84" stroke-width="1"/>
<line x1="1153.5" y1="548" x2="1153.5" y2="579" stroke="#135a84" stroke-width="1"/>
<rect x="1151.5" y="551.5" width="4" height="27" fill="#1e94d0" stroke="#135a84" stroke-width="1"/>
<line x1="1161.5" y1="551" x2="1161.5" y2="566" stroke="#135a84" stroke-width="1"/>
<rect x="1159.5" y="555.5" width="4" height="1" fill="#1e94d0" stroke="#135a84" stroke-width="1"/>
<line x1="1169.5" y1="549" x2="1169.5" y2="563" stroke="#b83c3c" stroke-width="1"/>
<rect x="1167.5" y="551.5" width="4" height="8" fill="#f86a6a" stroke="#b83c3c" stroke-width="1"/>
<line x1="1176.5" y1="549" x2="1176.5" y2="563" stroke="#b83c3c" stroke-width="1"/>
<rect x="1174.5" y="551.5" width="4" height="8" fill="#f86a6a" stroke="#b83c3c" stroke-width="1"/>
<line x1="1184.5" y1="545" x2="1184.5" y2="560" stroke="#135a84" stroke-width="1"/>
<rect x="1182.5" y="545.5" width="4" height="14" fill="#1e94d0" stroke="#135a84" stroke-width="1"/>
<line x1="1192.5" y1="482" x2="1192.5" y2="542" stroke="#135a84" stroke-width="1"/>
<rect x="1190.5" y="484.5" width="4" height="57" fill="#1e94d0" stroke="#135a84" stroke-width="1"/>
<line x1="1200.5" y1="461" x2="1200.5" y2="510" stroke="#b83c3c" stroke-width="1"/>
<rect x="1198.5" y="481.5" width="4" height="24" fill="#f86a6a" stroke="#b83c3c" stroke-width="1"/>
<line x1="1208.5" y1="494" x2="1208.5" y2="527" stroke="#135a84" stroke-width="1"/>
<rect x="1206.5" y="508.5" width="4" height="1" fill="#1e94d0" stroke="#135a84" stroke-width="1"/>
<line x1="1216.5" y1="505" x2="1216.5" y2="520" stroke="#135a84" stroke-width="1"/>
<rect x="1214.5" y="508.5" width="4" height="4" fill="#1e94d0" stroke="#135a84" stroke-width="1"/>
<line x1="1223.5" y1="505" x2="1223.5" y2="523" stroke="#135a84" stroke-width="1"/>
<rect x="1221.5" y="508.5" width="4" height="4" fill="#1e94d0" stroke="#135a84" stroke-width="1"/>
<line x1="1231.5" y1="478" x2="1231.5" y2="506" stroke="#135a84" stroke-width="1"/>
<rect x="1229.5" y="481.5" width="4" height="24" fill="#1e94d0" stroke="#135a84" stroke-width="1"/>
<line x1="1239.5" y1="448" x2="1239.5" y2="483" stroke="#135a84" stroke-width="1"/>
<rect x="1237.5" y="461.5" width="4" height="17" fill="#1e94d0" stroke="#135a84" stroke-width="1"/>
<line x1="1247.5" y1="448" x2="1247.5" y2="476" stroke="#135a84" stroke-width="1"/>
<rect x="1245.5" y="448.5" width="4" height="17" fill="#1e94d0" stroke="#135a84" stroke-width="1"/>
<line x1="1255.5" y1="448" x2="1255.5" y2="469" stroke="#b83c3c" stroke-width="1"/>
<rect x="1253.5" y="451.5" width="4" height="10" fill="#f86a6a" stroke="#b83c3c" stroke-width="1"/>
<line x1="1262.5" y1="454" x2="1262.5" y2="469" stroke="#135a84" stroke-width="1"/>
<rect x="1260.5" y="458.5" width="4" height="7" fill="#1e94d0" stroke="#135a84" stroke-width="1"/>
<line x1="1270.5" y1="454" x2="1270.5" y2="466" stroke="#135a84" stroke-width="1"/>
<rect x="1268.5" y="461.5" width="4" height="1" fill="#1e94d0" stroke="#135a84" stroke-width="1"/>
<line x1="1278.5" y1="454" x2="1278.5" y2="469" stroke="#135a84" stroke-width="1"/>
<rect x="1276.5" y="461.5" width="4" height="4" fill="#1e94d0" stroke="#135a84" stroke-width="1"/>
<line x1="1286.5" y1="427" x2="1286.5" y2="462" stroke="#135a84" stroke-width="1"/>
<rect x="1284.5" y="428.5" width="4" height="30" fill="#1e94d0" stroke="#135a84" stroke-width="1"/>
<line x1="1294.5" y1="431" x2="1294.5" y2="445" stroke="#b83c3c" stroke-width="1"/>
<rect x="1292.5" y="431.5" width="4" height="13" fill="#f86a6a" stroke="#b83c3c" stroke-width="1"/>
<line x1="1301.5" y1="444" x2="1301.5" y2="486" stroke="#b83c3c" stroke-width="1"/>
<rect x="1299.5" y="448.5" width="4" height="34" fill="#f86a6a" stroke="#b83c3c" stroke-width="1"/>
<line x1="1309.5" y1="482" x2="1309.5" y2="533" stroke="#b83c3c" stroke-width="1"/>
<rect x="1307.5" y="484.5" width="4" height="24" fill="#f86a6a" stroke="#b83c3c" stroke-width="1"/>
<line x1="1317.5" y1="488" x2="1317.5" y2="523" stroke="#b83c3c" stroke-width="1"/>
<rect x="1315.5" y="505.5" width="4" height="17" fill="#f86a6a" stroke="#b83c3c" stroke-width="1"/>
<line x1="1325.5" y1="518" x2="1325.5" y2="540" stroke="#b83c3c" stroke-width="1"/>
<rect x="1323.5" y="518.5" width="4" height="10" fill="#f86a6a" stroke="#b83c3c" stroke-width="1"/>
<line x1="1333.5" y1="525" x2="1333.5" y2="537" stroke="#135a84" stroke-width="1"/>
<rect x="1331.5" y="528.5" width="4" height="4" fill="#1e94d0" stroke="#135a84" stroke-width="1"/>
<line x1="1341.5" y1="508" x2="1341.5" y2="526" stroke="#135a84" stroke-width="1"/>
<rect x="1339.5" y="512.5" width="4" height="13" fill="#1e94d0" stroke="#135a84" stroke-width="1"/>
<line x1="1348.5" y1="478" x2="1348.5" y2="506" stroke="#135a84" stroke-width="1"/>
<rect x="1346.5" y="494.5" width="4" height="11" fill="#1e94d0" stroke="#135a84" stroke-width="1"/>
<line x1="1356.5" y1="488" x2="1356.5" y2="523" stroke="#b83c3c" stroke-width="1"/>
<rect x="1354.5" y="498.5" width="4" height="21" fill="#f86a6a" stroke="#b83c3c" stroke-width="1"/>
<line x1="1364.5" y1="512" x2="1364.5" y2="526" stroke="#135a84" stroke-width="1"/>
<rect x="1362.5" y="515.5" width="4" height="1" fill="#1e94d0" stroke="#135a84" stroke-width="1"/>
<line x1="1372.5" y1="501" x2="1372.5" y2="523" stroke="#135a84" stroke-width="1"/>
<rect x="1370.5" y="505.5" width="4" height="7" fill="#1e94d0" stroke="#135a84" stroke-width="1"/>
<line x1="1380.5" y1="495" x2="1380.5" y2="529" stroke="#b83c3c" stroke-width="1"/>
<rect x="1378.5" y="501.5" width="4" height="21" fill="#f86a6a" stroke="#b83c3c" stroke-width="1"/>
<line x1="1387.5" y1="515" x2="1387.5" y2="533" stroke="#135a84" stroke-width="1"/>
<rect x="1385.5" y="515.5" width="4" height="10" fill="#1e94d0" stroke="#135a84" stroke-width="1"/>
<line x1="1395.5" y1="464" x2="1395.5" y2="520" stroke="#135a84" stroke-width="1"/>
<rect x="1393.5" y="471.5" width="4" height="48" fill="#1e94d0" stroke="#135a84" stroke-width="1"/>
<line x1="1403.5" y1="464" x2="1403.5" y2="475" stroke="#135a84" stroke-width="1"/>
<rect x="1401.5" y="471.5" width="4" height="3" fill="#1e94d0" stroke="#135a84" stroke-width="1"/>
<line x1="1411.5" y1="454" x2="1411.5" y2="486" stroke="#135a84" stroke-width="1"/>
<rect x="1409.5" y="462.5" width="4" height="12" fill="#1e94d0" stroke="#135a84" stroke-width="1"/>
<line x1="1419.5" y1="455" x2="1419.5" y2="463" stroke="#b83c3c" stroke-width="1"/>
<rect x="1417.5" y="458.5" width="4" height="4" fill="#f86a6a" stroke="#b83c3c" stroke-width="1"/>
<line x1="1426.5" y1="464" x2="1426.5" y2="495" stroke="#b83c3c" stroke-width="1"/>
<rect x="1424.5" y="464.5" width="4" height="30" fill="#f86a6a" stroke="#b83c3c" stroke-width="1"/>
<line x1="1434.5" y1="468" x2="1434.5" y2="495" stroke="#135a84" stroke-width="1"/>
<rect x="1432.5" y="481.5" width="4" height="11" fill="#1e94d0" stroke="#135a84" stroke-width="1"/>
<line x1="1442.5" y1="462" x2="1442.5" y2="482" stroke="#135a84" stroke-width="1"/>
<rect x="1440.5" y="462.5" width="4" height="17" fill="#1e94d0" stroke="#135a84" stroke-width="1"/>
<line x1="1450.5" y1="444" x2="1450.5" y2="465" stroke="#135a84" stroke-width="1"/>
<rect x="1448.5" y="451.5" width="4" height="4" fill="#1e94d0" stroke="#135a84" stroke-width="1"/>
<line x1="1458.5" y1="411" x2="1458.5" y2="450" stroke="#135a84" stroke-width="1"/>
<rect x="1456.5" y="431.5" width="4" height="18" fill="#1e94d0" stroke="#135a84" stroke-width="1"/>
<line x1="1465.5" y1="421" x2="1465.5" y2="443" stroke="#b83c3c" stroke-width="1"/>
<rect x="1463.5" y="427.5" width="4" height="8" fill="#f86a6a" stroke="#b83c3c" stroke-width="1"/>
<line x1="1473.5" y1="421" x2="1473.5" y2="445" stroke="#b83c3c" stroke-width="1"/>
<rect x="1471.5" y="438.5" width="4" height="4" fill="#f86a6a" stroke="#b83c3c" stroke-width="1"/>
<line x1="1481.5" y1="442" x2="1481.5" y2="486" stroke="#b83c3c" stroke-width="1"/>
<rect x="1479.5" y="444.5" width="4" height="7" fill="#f86a6a" stroke="#b83c3c" stroke-width="1"/>
<line x1="1489.5" y1="451" x2="1489.5" y2="473" stroke="#135a84" stroke-width="1"/>
<rect x="1487.5" y="461.5" width="4" height="1" fill="#1e94d0" stroke="#135a84" stroke-width="1"/>
<line x1="1497.5" y1="438" x2="1497.5" y2="466" stroke="#135a84" stroke-width="1"/>
<rect x="1495.5" y="464.5" width="4" height="1" fill="#1e94d0" stroke="#135a84" stroke-width="1"/>
<line x1="1505.5" y1="461" x2="1505.5" y2="516" stroke="#b83c3c" stroke-width="1"/>
<rect x="1503.5" y="461.5" width="4" height="51" fill="#f86a6a" stroke="#b83c3c" stroke-width="1"/>
<line x1="1512.5" y1="509" x2="1512.5" y2="533" stroke="#b83c3c" stroke-width="1"/>
<rect x="1510.5" y="515.5" width="4" height="13" fill="#f86a6a" stroke="#b83c3c" stroke-width="1"/>
<line x1="1520.5" y1="478" x2="1520.5" y2="527" stroke="#135a84" stroke-width="1"/>
<rect x="1518.5" y="501.5" width="4" height="25" fill="#1e94d0" stroke="#135a84" stroke-width="1"/>
<line x1="1528.5" y1="491" x2="1528.5" y2="513" stroke="#135a84" stroke-width="1"/>
<rect x="1526.5" y="498.5" width="4" height="3" fill="#1e94d0" stroke="#135a84" stroke-width="1"/>
<line x1="1536.5" y1="498" x2="1536.5" y2="677" stroke="#b83c3c" stroke-width="1"/>
<rect x="1534.5" y="498.5" width="4" height="175" fill="#f86a6a" stroke="#b83c3c" stroke-width="1"/>
<line x1="1544.5" y1="636" x2="1544.5" y2="687" stroke="#135a84" stroke-width="1"/>
<rect x="1542.5" y="665.5" width="4" height="11" fill="#1e94d0" stroke="#135a84" stroke-width="1"/>
<line x1="1551.5" y1="658" x2="1551.5" y2="703" stroke="#b83c3c" stroke-width="1"/>
<rect x="1549.5" y="665.5" width="4" height="14" fill="#f86a6a" stroke="#b83c3c" stroke-width="1"/>
<line x1="1559.5" y1="655" x2="1559.5" y2="687" stroke="#135a84" stroke-width="1"/>
<rect x="1557.5" y="662.5" width="4" height="21" fill="#1e94d0" stroke="#135a84" stroke-width="1"/>
<line x1="1567.5" y1="568" x2="1567.5" y2="666" stroke="#135a84" stroke-width="1"/>
<rect x="1565.5" y="602.5" width="4" height="56" fill="#1e94d0" stroke="#135a84" stroke-width="1"/>
<line x1="1575.5" y1="545" x2="1575.5" y2="614" stroke="#135a84" stroke-width="1"/>
<rect x="1573.5" y="565.5" width="4" height="34" fill="#1e94d0" stroke="#135a84" stroke-width="1"/>
<line x1="1583.5" y1="525" x2="1583.5" y2="562" stroke="#135a84" stroke-width="1"/>
<rect x="1581.5" y="538.5" width="4" height="23" fill="#1e94d0" stroke="#135a84" stroke-width="1"/>
<line x1="1590.5" y1="538" x2="1590.5" y2="583" stroke="#b83c3c" stroke-width="1"/>
<rect x="1588.5" y="541.5" width="4" height="20" fill="#f86a6a" stroke="#b83c3c" stroke-width="1"/>
<line x1="1598.5" y1="538" x2="1598.5" y2="576" stroke="#135a84" stroke-width="1"/>
<rect x="1596.5" y="545.5" width="4" height="20" fill="#1e94d0" stroke="#135a84" stroke-width="1"/>
<line x1="1606.5" y1="538" x2="1606.5" y2="559" stroke="#135a84" stroke-width="1"/>
<rect x="1604.5" y="541.5" width="4" height="1" fill="#1e94d0" stroke="#135a84" stroke-width="1"/>
<line x1="1614.5" y1="528" x2="1614.5" y2="636" stroke="#b83c3c" stroke-width="1"/>
<rect x="1612.5" y="541.5" width="4" height="94" fill="#f86a6a" stroke="#b83c3c" stroke-width="1"/>
<line x1="1622.5" y1="618" x2="1622.5" y2="800" stroke="#b83c3c" stroke-width="1"/>
<rect x="1620.5" y="632.5" width="4" height="167" fill="#f86a6a" stroke="#b83c3c" stroke-width="1"/>
<line x1="1629.5" y1="732" x2="1629.5" y2="894" stroke="#135a84" stroke-width="1"/>
<rect x="1627.5" y="776.5" width="4" height="20" fill="#1e94d0" stroke="#135a84" stroke-width="1"/>
<line x1="1637.5" y1="705" x2="1637.5" y2="880" stroke="#135a84" stroke-width="1"/>
<rect x="1635.5" y="732.5" width="4" height="55" fill="#1e94d0" stroke="#135a84" stroke-width="1"/>
<line x1="1645.5" y1="682" x2="1645.5" y2="837" stroke="#b83c3c" stroke-width="1"/>
<rect x="1643.5" y="735.5" width="4" height="71" fill="#f86a6a" stroke="#b83c3c" stroke-width="1"/>
<line x1="1653.5" y1="699" x2="1653.5" y2="824" stroke="#135a84" stroke-width="1"/>
<rect x="1651.5" y="802.5" width="4" height="8" fill="#1e94d0" stroke="#135a84" stroke-width="1"/>
<line x1="1661.5" y1="786" x2="1661.5" y2="961" stroke="#b83c3c" stroke-width="1"/>
<rect x="1659.5" y="806.5" width="4" height="28" fill="#f86a6a" stroke="#b83c3c" stroke-width="1"/>
<line x1="1669.5" y1="759" x2="1669.5" y2="908" stroke="#b83c3c" stroke-width="1"/>
<rect x="1667.5" y="836.5" width="4" height="65" fill="#f86a6a" stroke="#b83c3c" stroke-width="1"/>
<line x1="1676.5" y1="786" x2="1676.5" y2="932" stroke="#135a84" stroke-width="1"/>
<rect x="1674.5" y="802.5" width="4" height="92" fill="#1e94d0" stroke="#135a84" stroke-width="1"/>
<line x1="1684.5" y1="746" x2="1684.5" y2="854" stroke="#135a84" stroke-width="1"/>
<rect x="1682.5" y="746.5" width="4" height="53" fill="#1e94d0" stroke="#135a84" stroke-width="1"/>
<line x1="1692.5" y1="712" x2="1692.5" y2="828" stroke="#b83c3c" stroke-width="1"/>
<rect x="1690.5" y="752.5" width="4" height="5" fill="#f86a6a" stroke="#b83c3c" stroke-width="1"/>
<line x1="1700.5" y1="636" x2="1700.5" y2="768" stroke="#135a84" stroke-width="1"/>
<rect x="1698.5" y="650.5" width="4" height="102" fill="#1e94d0" stroke="#135a84" stroke-width="1"/>
<line x1="1708.5" y1="590" x2="1708.5" y2="655" stroke="#135a84" stroke-width="1"/>
<rect x="1706.5" y="593.5" width="4" height="53" fill="#1e94d0" stroke="#135a84" stroke-width="1"/>
<line x1="1715.5" y1="591" x2="1715.5" y2="669" stroke="#b83c3c" stroke-width="1"/>
<rect x="1713.5" y="596.5" width="4" height="41" fill="#f86a6a" stroke="#b83c3c" stroke-width="1"/>
<line x1="1723.5" y1="616" x2="1723.5" y2="741" stroke="#b83c3c" stroke-width="1"/>
<rect x="1721.5" y="640.5" width="4" height="67" fill="#f86a6a" stroke="#b83c3c" stroke-width="1"/>
<line x1="1731.5" y1="549" x2="1731.5" y2="704" stroke="#135a84" stroke-width="1"/>
<rect x="1729.5" y="569.5" width="4" height="134" fill="#1e94d0" stroke="#135a84" stroke-width="1"/>
<line x1="1739.5" y1="513" x2="1739.5" y2="635" stroke="#b83c3c" stroke-width="1"/>
<rect x="1737.5" y="566.5" width="4" height="44" fill="#f86a6a" stroke="#b83c3c" stroke-width="1"/>
<line x1="1747.5" y1="600" x2="1747.5" y2="695" stroke="#b83c3c" stroke-width="1"/>
<rect x="1745.5" y="606.5" width="4" height="47" fill="#f86a6a" stroke="#b83c3c" stroke-width="1"/>
<line x1="1754.5" y1="503" x2="1754.5" y2="651" stroke="#135a84" stroke-width="1"/>
<rect x="1752.5" y="509.5" width="4" height="141" fill="#1e94d0" stroke="#135a84" stroke-width="1"/>
<line x1="1762.5" y1="462" x2="1762.5" y2="521" stroke="#b83c3c" stroke-width="1"/>
<rect x="1760.5" y="509.5" width="4" height="7" fill="#f86a6a" stroke="#b83c3c" stroke-width="1"/>
<line x1="1770.5" y1="486" x2="1770.5" y2="595" stroke="#b83c3c" stroke-width="1"/>
<rect x="1768.5" y="520.5" width="4" height="36" fill="#f86a6a" stroke="#b83c3c" stroke-width="1"/>
<line x1="1778.5" y1="520" x2="1778.5" y2="558" stroke="#135a84" stroke-width="1"/>
<rect x="1776.5" y="536.5" width="4" height="18" fill="#1e94d0" stroke="#135a84" stroke-width="1"/>
<line x1="1786.5" y1="496" x2="1786.5" y2="540" stroke="#135a84" stroke-width="1"/>
<rect x="1784.5" y="529.5" width="4" height="7" fill="#1e94d0" stroke="#135a84" stroke-width="1"/>
<line x1="1793.5" y1="509" x2="1793.5" y2="567" stroke="#b83c3c" stroke-width="1"/>
<rect x="1791.5" y="534.5" width="4" height="32" fill="#f86a6a" stroke="#b83c3c" stroke-width="1"/>
<line x1="1801.5" y1="553" x2="1801.5" y2="644" stroke="#b83c3c" stroke-width="1"/>
<rect x="1799.5" y="563.5" width="4" height="80" fill="#f86a6a" stroke="#b83c3c" stroke-width="1"/>
<line x1="1809.5" y1="610" x2="1809.5" y2="678" stroke="#b83c3c" stroke-width="1"/>
<rect x="1807.5" y="640.5" width="4" height="37" fill="#f86a6a" stroke="#b83c3c" stroke-width="1"/>
<line x1="1817.5" y1="663" x2="1817.5" y2="749" stroke="#b83c3c" stroke-width="1"/>
<rect x="1815.5" y="680.5" width="4" height="23" fill="#f86a6a" stroke="#b83c3c" stroke-width="1"/>
<line x1="1825.5" y1="700" x2="1825.5" y2="759" stroke="#b83c3c" stroke-width="1"/>
<rect x="1823.5" y="700.5" width="4" height="13" fill="#f86a6a" stroke="#b83c3c" stroke-width="1"/>
<line x1="1833.5" y1="650" x2="1833.5" y2="721" stroke="#135a84" stroke-width="1"/>
<rect x="1831.5" y="663.5" width="4" height="54" fill="#1e94d0" stroke="#135a84" stroke-width="1"/>
<line x1="1840.5" y1="603" x2="1840.5" y2="679" stroke="#135a84" stroke-width="1"/>
<rect x="1838.5" y="613.5" width="4" height="55" fill="#1e94d0" stroke="#135a84" stroke-width="1"/>
<line x1="1848.5" y1="546" x2="1848.5" y2="617" stroke="#135a84" stroke-width="1"/>
<rect x="1846.5" y="550.5" width="4" height="60" fill="#1e94d0" stroke="#135a84" stroke-width="1"/>
<line x1="224.5" y1="195" x2="224.5" y2="364" stroke="#000" stroke-width="1"/>
</svg>

<div id="axis" class="a"></div>
<div class="tick" style="top:147px"></div>
<div class="pl" style="top:141px;">16 790</div>
<div class="tick" style="top:214px"></div>
<div class="pl" style="top:208px;">16 780</div>
<div class="tick" style="top:281px"></div>
<div class="pl" style="top:275px;">16 770</div>
<div class="tick" style="top:348px"></div>
<div class="pl" style="top:342px;">16 760</div>
<div class="tick" style="top:415px"></div>
<div class="pl" style="top:409px;font-weight:700;font-size:12px">16 750</div>
<div class="tick" style="top:482px"></div>
<div class="pl" style="top:476px;">16 740</div>
<div class="tick" style="top:549px"></div>
<div class="pl" style="top:543px;">16 730</div>
<div class="tick" style="top:616px"></div>
<div class="pl" style="top:610px;">16 720</div>
<div class="tick" style="top:683px"></div>
<div class="pl" style="top:677px;">16 710</div>
<div class="tick" style="top:749px"></div>
<div class="pl" style="top:743px;font-weight:700;font-size:12px">16 700</div>
<div class="tick" style="top:816px"></div>
<div class="pl" style="top:810px;">16 690</div>
<div class="tick" style="top:883px"></div>
<div class="pl" style="top:877px;">16 680</div>
<div id="timebar" class="a"></div>
<div class="a" style="left:37px;top:999px;width:1px;height:3px;background:#777"></div>
<div class="tl" style="left:23px">15:00</div>
<div class="a" style="left:131px;top:999px;width:1px;height:3px;background:#777"></div>
<div class="tl" style="left:117px">16:00</div>
<div class="a" style="left:224px;top:999px;width:1px;height:3px;background:#777"></div>
<div class="tl" style="left:210px">17:00</div>
<div class="a" style="left:318px;top:999px;width:1px;height:3px;background:#777"></div>
<div class="tl" style="left:304px">18:00</div>
<div class="a" style="left:412px;top:999px;width:1px;height:3px;background:#777"></div>
<div class="tl" style="left:398px">19:00</div>
<div class="a" style="left:506px;top:999px;width:1px;height:3px;background:#777"></div>
<div class="tl" style="left:492px">20:00</div>
<div class="a" style="left:599px;top:999px;width:1px;height:3px;background:#777"></div>
<div class="tl" style="left:585px">21:00</div>
<div class="a" style="left:693px;top:999px;width:1px;height:3px;background:#777"></div>
<div class="tl" style="left:679px">22:00</div>
<div class="a" style="left:787px;top:999px;width:1px;height:3px;background:#777"></div>
<div class="tl" style="left:781px;top:1002px;font-weight:700;font-size:12px">18</div>
<div class="a" style="left:880px;top:999px;width:1px;height:3px;background:#777"></div>
<div class="tl" style="left:866px">01:00</div>
<div class="a" style="left:974px;top:999px;width:1px;height:3px;background:#777"></div>
<div class="tl" style="left:960px">02:00</div>
<div class="a" style="left:1068px;top:999px;width:1px;height:3px;background:#777"></div>
<div class="tl" style="left:1054px">03:00</div>
<div class="a" style="left:1161px;top:999px;width:1px;height:3px;background:#777"></div>
<div class="tl" style="left:1147px">04:00</div>
<div class="a" style="left:1255px;top:999px;width:1px;height:3px;background:#777"></div>
<div class="tl" style="left:1241px">05:00</div>
<div class="a" style="left:1349px;top:999px;width:1px;height:3px;background:#777"></div>
<div class="tl" style="left:1335px">06:00</div>
<div class="a" style="left:1442px;top:999px;width:1px;height:3px;background:#777"></div>
<div class="tl" style="left:1428px">07:00</div>
<div class="a" style="left:1536px;top:999px;width:1px;height:3px;background:#777"></div>
<div class="tl" style="left:1522px">08:00</div>
<div class="a" style="left:1630px;top:999px;width:1px;height:3px;background:#777"></div>
<div class="tl" style="left:1616px">09:00</div>
<div class="a" style="left:1724px;top:999px;width:1px;height:3px;background:#777"></div>
<div class="tl" style="left:1710px">10:00</div>
<div class="a" style="left:1817px;top:999px;width:1px;height:3px;background:#777"></div>
<div class="tl" style="left:1803px">11:00</div>
<div class="t" style="left:1018px;top:182px;font-size:10.7px">16 782,9</div>
<div class="t" style="left:1018px;top:266px;font-size:10.7px">16 770,4</div>
<div class="t" style="left:1018px;top:350px;font-size:10.7px">16 757,9</div>
<div class="t" style="left:1018px;top:413px;font-size:10.7px">16 748,4</div>
<div class="t" style="left:1018px;top:481px;font-size:10.7px">16 738,2</div>
<div class="t" style="left:905px;top:681px;font-size:10.7px">16 708,4</div>
<div class="t" style="left:905px;top:754px;font-size:10.7px">16 697,5</div>
<div class="t" style="left:905px;top:823px;font-size:10.7px">16 687,2</div>
<div class="t" style="left:905px;top:913px;font-size:10.7px">16 673,7</div>
<div class="t" style="left:1767px;top:393px;font-size:10.7px">Clo 17h 16 751,4</div>
<div class="t" style="left:1786px;top:564px;font-size:10.7px">15h 16 725,9</div>
<div class="t" style="left:1792px;top:783px;font-size:10.7px">9h 16 693,2</div>
<div class="t" style="left:10px;top:934px;font-size:10.7px">Clo M</div>
<div class="a" style="left:1853px;top:946px;width:6px;height:1px;background:repeating-linear-gradient(90deg,#000 0 3px,transparent 3px 6px)"></div>
<div class="a" style="left:1858px;top:946px;width:46px;height:15px;background:#fff;border:1px solid #9aa4aa"></div>
<div class="t" style="left:1862px;top:948px;font-size:11px">16 670,8</div>
<div class="a" style="left:1858px;top:922px;width:60px;height:20px;background:linear-gradient(#fcd818,#e8aa12);border:1px solid #b89020"></div>
<div class="t" style="left:1860px;top:924px;font-size:16px;color:#111"><span style="font-size:11px;vertical-align:-2px">1</span>6 670,<span style="font-size:9px;vertical-align:5px">8</span></div>
<div class="a" style="left:1858px;top:941px;width:36px;height:15px;background:#84e088"></div>
<div class="t" style="left:1859px;top:943px;font-size:11px;color:#111">1m39s</div>
<div class="a" style="left:1918px;top:133px;width:1px;height:884px;background:#8a9aa3"></div>
<div class="a" style="left:1835px;top:999px;width:18px;height:18px;background:#fff;border-left:1px solid #c0c8cc"></div>
<div class="a" style="left:1836px;top:999px;width:17px;height:16px;background:linear-gradient(#fafafa,#eceeee)"></div><div class="t" style="left:1839px;top:1000px;font-size:15px;color:#444">&rsaquo;&rsaquo;</div>
<div class="t" style="left:2px;top:987px;font-size:11px">IT-Finance.com - Temps Réel</div>
<!-- ORDERS WINDOW -->
<div class="a" style="left:13px;top:702px;width:832px;height:158px;background:#9dbac9;border:1px solid #3d5b6a"></div>
<div class="a" style="left:14px;top:703px;width:830px;height:25px;background:linear-gradient(#c6e0fa,#a6c8ec);border-bottom:1px solid #7a9ab8"></div>
<svg class="a" style="left:17px;top:707px" width="18" height="17" viewBox="0 0 18 17"><line x1="4.5" y1="5" x2="4.5" y2="16" stroke="#c03030"/><rect x="1.5" y="7.5" width="6" height="6" fill="#f06a6a" stroke="#b83030"/><line x1="12.5" y1="0" x2="12.5" y2="15" stroke="#209030"/><rect x="9.5" y="3.5" width="6" height="9" fill="#50e060" stroke="#189028"/></svg>
<div class="a" style="left:38px;top:703px;width:1px;height:25px;background:#8aaac8"></div>
<div class="t" style="left:44px;top:710px;font-size:11px">Liste des ordres</div>
<div class="a" style="left:128px;top:703px;width:1px;height:25px;background:#8aaac8"></div>
<div class="t" style="left:134px;top:710px;font-size:11px">Ordres en attente &nbsp;<b>1</b></div>
<div class="a" style="left:234px;top:707px;width:12px;height:13px;background:#fff;border:1px solid #d8d8e0"></div>
<svg class="a" style="left:236px;top:709px" width="9" height="9"><path d="M1 1 L8 8 M8 1 L1 8" stroke="#e82a2a" stroke-width="2.4"/></svg>
<div class="a" style="left:251px;top:703px;width:1px;height:25px;background:#8aaac8"></div>
<div class="t" style="left:257px;top:710px;font-size:11px">2 jours</div>
<svg class="a" style="left:292px;top:713px" width="8" height="5"><path d="M0 0 L7 0 L3.5 4 Z" fill="#111"/></svg>
<div class="a" style="left:305px;top:703px;width:157px;height:24px;background:#fff;border-left:1px solid #8aaac8;border-right:1px solid #8aaac8"></div>
<div class="t" style="left:309px;top:710px;font-size:11px">dax</div>
<svg class="a" style="left:445px;top:709px" width="11" height="11"><path d="M1.5 1.5 L9.5 9.5 M9.5 1.5 L1.5 9.5" stroke="#e82a2a" stroke-width="2.8"/></svg>
<div class="t" style="left:468px;top:710px;font-size:11px">Données indicatives</div>
<svg class="a" style="left:569px;top:708px" width="14" height="13" viewBox="0 0 14 13"><ellipse cx="7" cy="5.5" rx="6.5" ry="5" fill="#3aa8f0"/><path d="M5 9 L4 13 L9 9.5 Z" fill="#3aa8f0"/><ellipse cx="5.5" cy="3.5" rx="3" ry="1.5" fill="#a8dcfc"/></svg>
<svg class="a" style="left:765px;top:706px" width="22" height="18" viewBox="0 0 22 18"><circle cx="4" cy="9" r="2.8" fill="#fff" stroke="#666"/><circle cx="14" cy="3.5" r="2.8" fill="#fff" stroke="#666"/><circle cx="14" cy="14" r="2.8" fill="#fff" stroke="#666"/><path d="M6.5 8 L11.5 4.5 M6.5 10 L11.5 13" stroke="#666" stroke-width="1.2"/><path d="M15 13 L21 13 L18 17 Z" fill="#111"/></svg>
<svg class="a" style="left:793px;top:708px" width="48" height="14" viewBox="0 0 48 14"><path d="M2 12h10" stroke="#445" stroke-width="2"/><rect x="18" y="2" width="10" height="10" fill="none" stroke="#445" stroke-width="1.6"/><path d="M34 2 L44 12 M44 2 L34 12" stroke="#445" stroke-width="2"/></svg>
<!-- tabs -->
<div class="a" style="left:14px;top:728px;width:68px;height:18px;background:linear-gradient(#5a9ae8,#3f7fd0);border-top-left-radius:2px;border-top-right-radius:2px"></div>
<div class="t" style="left:26px;top:733px;font-size:11px;color:#e8f0ff">Exécutés</div>
<div class="a" style="left:83px;top:729px;width:71px;height:17px;background:linear-gradient(#fafafa,#e8ecee);border:1px solid #b8c4ca;border-bottom:none;border-radius:2px 2px 0 0"></div>
<div class="t" style="left:95px;top:733px;font-size:11px">En attente</div>
<div class="a" style="left:155px;top:729px;width:102px;height:17px;background:linear-gradient(#fafafa,#e8ecee);border:1px solid #b8c4ca;border-bottom:none;border-radius:2px 2px 0 0"></div>
<div class="t" style="left:167px;top:733px;font-size:11px">Annulés/Rejetés</div>
<div class="a" style="left:258px;top:729px;width:77px;height:17px;background:linear-gradient(#fafafa,#e8ecee);border:1px solid #b8c4ca;border-bottom:none;border-radius:2px 2px 0 0"></div>
<div class="t" style="left:270px;top:733px;font-size:11px">Ordres liés</div>
<div class="a" style="left:335px;top:729px;width:120px;height:17px;background:linear-gradient(#fafafa,#e8ecee);border:1px solid #b8c4ca;border-bottom:none;border-radius:2px 2px 0 0"></div>
<div class="t" style="left:347px;top:733px;font-size:11px">Trading automatique</div>
<div class="a" style="left:456px;top:729px;width:47px;height:17px;background:linear-gradient(#fafafa,#e8ecee);border:1px solid #b8c4ca;border-bottom:none;border-radius:2px 2px 0 0"></div>
<div class="t" style="left:468px;top:733px;font-size:11px">Tous</div>
<!-- header -->
<div class="a" style="left:14px;top:746px;width:830px;height:16px;background:#3e6896"></div>
<svg class="a" style="left:17px;top:748px" width="33" height="13" viewBox="0 0 33 13"><path d="M0.5 0.5 H9.5 L12.5 3.5 V12.5 H0.5 Z" fill="#fff"/><path d="M2 3.5h6M2 5.5h8M2 7.5h8M2 9.5h8" stroke="#3e6896" stroke-width="1"/><path d="M15.5 3v8" stroke="#fff" stroke-width="1"/><path d="M19 12 L24.5 6.5" stroke="#fff" stroke-width="2.2"/><circle cx="26" cy="4.5" r="3.2" fill="#fff"/><path d="M26 4.5 L29 1.5" stroke="#3e6896" stroke-width="2"/></svg>
<svg class="a" style="left:73px;top:751px" width="9" height="7"><path d="M0.5 0.5 L8.5 0.5 L4.5 6 Z" fill="none" stroke="#fff" stroke-width="1.2"/></svg>
<div class="t" style="left:86px;top:750px;font-size:11px;color:#fff">Date</div>
<div class="a" style="left:133px;top:750px;width:1px;height:8px;background:#e8eef4"></div>
<div class="t" style="left:133px;width:101px;top:750px;font-size:11px;color:#fff;text-align:center">Nom</div>
<div class="a" style="left:234px;top:750px;width:1px;height:8px;background:#e8eef4"></div>
<div class="t" style="left:234px;width:102px;top:750px;font-size:11px;color:#fff;text-align:center">Symbole</div>
<div class="a" style="left:336px;top:750px;width:1px;height:8px;background:#e8eef4"></div>
<div class="t" style="left:336px;width:101px;top:750px;font-size:11px;color:#fff;text-align:center">Sens</div>
<div class="a" style="left:437px;top:750px;width:1px;height:8px;background:#e8eef4"></div>
<div class="t" style="left:437px;width:102px;top:750px;font-size:11px;color:#fff;text-align:center">Type</div>
<div class="a" style="left:539px;top:750px;width:1px;height:8px;background:#e8eef4"></div>
<div class="t" style="left:539px;width:101px;top:750px;font-size:11px;color:#fff;text-align:center">Qté</div>
<div class="a" style="left:640px;top:750px;width:1px;height:8px;background:#e8eef4"></div>
<div class="t" style="left:640px;width:102px;top:750px;font-size:11px;color:#fff;text-align:center">Prix</div>
<div class="a" style="left:742px;top:750px;width:1px;height:8px;background:#e8eef4"></div>
<div class="t" style="left:742px;width:102px;top:750px;font-size:11px;color:#fff;text-align:center">Gain</div>
<div class="a" style="left:14px;top:762px;width:830px;height:78px;background:#76d4fc"></div>
<div class="a" style="left:742px;top:762px;width:102px;height:38px;background:#9cd898"></div>
<div class="a" style="left:32px;top:762px;width:1px;height:78px;background:#9abccc"></div>
<div class="a" style="left:133px;top:762px;width:1px;height:78px;background:#9abccc"></div>
<div class="a" style="left:234px;top:762px;width:1px;height:78px;background:#9abccc"></div>
<div class="a" style="left:336px;top:762px;width:1px;height:78px;background:#9abccc"></div>
<div class="a" style="left:437px;top:762px;width:1px;height:78px;background:#9abccc"></div>
<div class="a" style="left:539px;top:762px;width:1px;height:78px;background:#9abccc"></div>
<div class="a" style="left:640px;top:762px;width:1px;height:78px;background:#9abccc"></div>
<div class="a" style="left:742px;top:762px;width:1px;height:78px;background:#9abccc"></div>
<svg class="a" style="left:18px;top:776px" width="11" height="10" viewBox="0 0 11 10"><rect x="0.5" y="0.5" width="10" height="9" fill="#fff" stroke="#555" stroke-width="1"/><path d="M2 2.5h7M2 4.5h7M2 6.5h7" stroke="#222" stroke-width="1"/></svg>
<div class="t" style="left:41px;top:776px;font-size:11px;color:#1e8a2a">18 déc., 10:54:07</div>
<div class="t" style="left:135px;top:776px;font-size:11px">Allemagne 40 Cas...</div>
<div class="t" style="left:236px;top:776px;font-size:11px">DAX</div>
<div class="t" style="left:336px;width:100px;top:776px;font-size:11px;color:#1e8a2a;text-align:right">Achat</div>
<div class="t" style="left:437px;width:101px;top:776px;font-size:11px;color:#1e8a2a;text-align:right">Clôturer</div>
<div class="t" style="left:539px;width:100px;top:776px;font-size:11px;font-weight:700;color:#1e8a2a;text-align:right">4</div>
<div class="t" style="left:640px;width:101px;top:776px;font-size:11px;font-weight:700;color:#1e8a2a;text-align:right">16 723,7</div>
<div class="t" style="left:742px;width:100px;top:776px;font-size:11px;text-align:right">56,40 €</div>
<svg class="a" style="left:18px;top:815px" width="11" height="10" viewBox="0 0 11 10"><rect x="0.5" y="0.5" width="10" height="9" fill="#fff" stroke="#555" stroke-width="1"/><path d="M2 2.5h7M2 4.5h7M2 6.5h7" stroke="#222" stroke-width="1"/></svg>
<div class="t" style="left:41px;top:815px;font-size:11px;color:#8a1a3a">18 déc., 10:26:01</div>
<div class="t" style="left:135px;top:815px;font-size:11px">Allemagne 40 Cas...</div>
<div class="t" style="left:236px;top:815px;font-size:11px">DAX</div>
<div class="t" style="left:336px;width:100px;top:815px;font-size:11px;color:#8a1a3a;text-align:right">Vente</div>
<div class="t" style="left:437px;width:101px;top:815px;font-size:11px;color:#8a1a3a;text-align:right">Au marché</div>
<div class="t" style="left:539px;width:100px;top:815px;font-size:11px;font-weight:700;color:#8a1a3a;text-align:right">-4</div>
<div class="t" style="left:640px;width:101px;top:815px;font-size:11px;font-weight:700;color:#8a1a3a;text-align:right">16 737,8</div>
<div id="bottombar" class="a"></div>
<div class="a" style="left:0;top:1015px;width:1919px;height:1px;background:#7a8a90"></div>
<div class="a" style="left:0;top:1016px;width:30px;height:24px;background:#a4bcc8"></div>
<svg class="a" style="left:5px;top:1019px" width="20" height="19" viewBox="0 0 20 19"><path d="M1 3 L10 15" stroke="#c03030" stroke-width="1"/><path d="M2 17 Q3 6 6 6 Q8 8 5 17" fill="none" stroke="#444" stroke-width="0.8"/><line x1="2" y1="18" x2="9" y2="18" stroke="#20a020" stroke-width="1.2"/><path d="M16 2 L19 4 L10 15 L7 16 L8 13 Z" fill="#f0d040" stroke="#555" stroke-width="0.8"/></svg>
<div class="a" style="left:30px;top:1016px;width:1px;height:24px;background:#8aa4b0"></div>
<svg class="a" style="left:34px;top:1026px" width="8" height="5"><path d="M0 0 L7 0 L3.5 4 Z" fill="#111"/></svg>
<div class="a" style="left:46px;top:1016px;width:29px;height:24px;background:#fff"></div>
<svg class="a" style="left:49px;top:1019px" width="23" height="19" viewBox="0 0 23 19"><path d="M1 6 Q5 0 9 6 T17 8 Q20 10 22 4" stroke="#e05050" stroke-width="1.2" fill="none"/><path d="M1 10 Q6 4 10 9 T22 9" stroke="#40b040" stroke-width="1.2" fill="none"/><path d="M1 18 V13 H4 V16 H8 V13 H11 V16 H15 V13 H18 V16 H22 V18 Z" fill="#30a030"/></svg>
<div class="a" style="left:76px;top:1016px;width:14px;height:24px;background:#fff"></div>
<svg class="a" style="left:79px;top:1026px" width="8" height="5"><path d="M0 0 L7 0 L3.5 4 Z" fill="#111"/></svg>
<div class="a" style="left:90px;top:1016px;width:67px;height:24px;background:#3d8ed8"></div>
<svg class="a" style="left:93px;top:1020px" width="15" height="16" viewBox="0 0 15 16"><circle cx="3" cy="8" r="2.6" fill="#fff"/><circle cx="12" cy="3" r="2.6" fill="#fff"/><circle cx="12" cy="13" r="2.6" fill="#fff"/><path d="M3 8 L12 3 M3 8 L12 13" stroke="#fff" stroke-width="1.6"/></svg>
<div class="t" style="left:113px;top:1022px;font-size:11px;color:#fff">Partager</div>
<svg class="a" style="left:162px;top:1019px" width="17" height="19" viewBox="0 0 17 19"><path d="M0.5 0.5 H7 L9.5 3 V12.5 H0.5 Z" fill="#fff" stroke="#c8d0d8"/><rect x="4" y="4.5" width="12" height="8.5" rx="2" fill="#3a70d8"/><path d="M6 13 L5.5 17.5 L10 13 Z" fill="#3a70d8"/><path d="M6.5 9h1.6M9.2 9h1.6M11.9 9h1.6" stroke="#fff" stroke-width="1.6"/></svg>
<svg class="a" style="left:188px;top:1020px" width="15" height="16" viewBox="0 0 15 16"><rect x="0.5" y="0.5" width="13" height="15" fill="#fff" stroke="#555"/><path d="M2 3.5 L8 5.5 M2 6.5 L12 9.5 M2 9.5 L12 12 M5 12.5 L12 14" stroke="#333" stroke-width="1.5"/><path d="M7 0.5 H13.5 V6 Z" fill="#f06060"/><path d="M0.5 9 L6.5 15.5 H0.5 Z" fill="#40c040"/></svg>
<svg class="a" style="left:211px;top:1019px" width="18" height="18" viewBox="0 0 18 18"><path d="M0.5 1.5h7v3h-7zM2.5 5.5h6v3h-6zM0.5 9.5h7v3h-7zM2.5 13.5h6v3h-6z" fill="#40d040" stroke="#208a20" stroke-width="0.8"/><path d="M9.5 1.5h5v3h-5zM9.5 5.5h7v3h-7zM9.5 9.5h5v3h-5zM9.5 13.5h7v3h-7z" fill="#f07070" stroke="#c03030" stroke-width="0.8"/></svg>
<svg class="a" style="left:236px;top:1019px" width="19" height="19" viewBox="0 0 19 19"><rect x="0.5" y="0.5" width="12" height="11" fill="#fff" stroke="#1a50b0"/><rect x="0.5" y="0.5" width="12" height="2.5" fill="#2a60c8"/><path d="M2 9 Q4 3 6 7 T11 5" stroke="#40a040" stroke-width="1" fill="none"/><rect x="5.5" y="6.5" width="13" height="12" fill="#fff" stroke="#1a50b0"/><rect x="5.5" y="6.5" width="13" height="2.5" fill="#2a60c8"/><path d="M7 16 Q9 10 11 14 T17 11" stroke="#e04040" stroke-width="1" fill="none"/><path d="M13 13 Q15 10 17 11" stroke="#40a040" stroke-width="1" fill="none"/></svg>
<svg class="a" style="left:261px;top:1018px" width="18" height="20" viewBox="0 0 18 20"><path d="M3.5 7v12" stroke="#a02020"/><rect x="0.5" y="8.5" width="6" height="8" fill="#f06060" stroke="#b02a2a"/><path d="M13.5 0v19" stroke="#208020"/><rect x="10.5" y="2.5" width="7" height="13" fill="#50d050" stroke="#208a20"/><path d="M3 17 L10 10" stroke="#111" stroke-width="3.4" stroke-linecap="round"/><path d="M3 17 L10 10" stroke="#fff" stroke-width="1.8" stroke-linecap="round"/><circle cx="11.5" cy="7.5" r="3.4" fill="#fff" stroke="#111" stroke-width="1.1"/><path d="M11.5 7.5 L15 3.5" stroke="#50d050" stroke-width="2.4"/></svg>
<div class="t" style="left:285px;top:1020px;font-size:14px;color:#555">&laquo;</div>
<div class="a" style="left:299px;top:1020px;width:16px;height:16px;background:linear-gradient(#c4d8e2,#a8c0cc);border:1px solid #7e98a4;border-radius:2px"></div>
<svg class="a" style="left:304px;top:1024px" width="5" height="8"><path d="M4.5 0 L4.5 8 L0 4 Z" fill="#111"/></svg>
<div class="a" style="left:315px;top:1020px;width:1485px;height:16px;background:#9ab8c6;border-top:1px solid #6f8a96;border-bottom:1px solid #6f8a96"></div>
<div class="a" style="left:963px;top:1020px;width:368px;height:16px;background:linear-gradient(#c6dce6,#a8c2ce);border:1px solid #7e98a4"></div>
<div class="a" style="left:1799px;top:1020px;width:15px;height:16px;background:linear-gradient(#c4d8e2,#a8c0cc);border:1px solid #7e98a4;border-radius:2px"></div>
<svg class="a" style="left:1805px;top:1024px" width="5" height="8"><path d="M0 0 L0 8 L4.5 4 Z" fill="#111"/></svg>
<svg class="a" style="left:1819px;top:1018px" width="100" height="20" viewBox="0 0 100 20"><circle cx="9" cy="8" r="5" fill="#eee" stroke="#111" stroke-width="1.6"/><path d="M12.5 11.5 L17 16" stroke="#111" stroke-width="2.4"/><path d="M3 17h8M3 17l2-2M3 17l2 2M11 17l-2-2M11 17l-2 2M17 2v8M17 2l-2 2M17 2l2 2M17 10l-2-2M17 10l2-2" stroke="#2050d0" stroke-width="1.1" fill="none"/><circle cx="33" cy="8" r="5" fill="#eee" stroke="#111" stroke-width="1.6"/><path d="M36.5 11.5 L41 16" stroke="#111" stroke-width="2.4"/><path d="M30.5 8h5" stroke="#1a3ab0" stroke-width="1.6"/><circle cx="59" cy="8" r="5" fill="#eee" stroke="#111" stroke-width="1.6"/><path d="M62.5 11.5 L67 16" stroke="#111" stroke-width="2.4"/><path d="M56.5 8h5M59 5.5v5" stroke="#1a3ab0" stroke-width="1.6"/><path d="M75 3h14v4h-14z" fill="#fff" stroke="#333" stroke-width="1"/><path d="M77 5h1M80 5h1M83 5h1M86 5h1" stroke="#333" stroke-width="1.2"/><path d="M82 9v7M79 13l3 3 3-3" stroke="#2a70e0" stroke-width="1.6" fill="none"/></svg>
<div id="taskbar" class="a"></div>
<svg class="a" style="left:15px;top:1052px" width="17" height="17" viewBox="0 0 17 17"><path d="M0 2.3 L7 1.3 V8 H0 Z M8 1.1 L17 0 V8 H8 Z M0 9 H7 V15.7 L0 14.7 Z M8 9 H17 V17 L8 15.9 Z" fill="#fff"/></svg>
<svg class="a" style="left:59px;top:1049px" width="24" height="24" viewBox="0 0 24 24"><circle cx="14" cy="9.5" r="7" fill="none" stroke="#fff" stroke-width="2"/><path d="M9 14.5 L2 22" stroke="#fff" stroke-width="2.4"/></svg>
<svg class="a" style="left:109px;top:1050px" width="19" height="20" viewBox="0 0 19 20"><rect x="1" y="5" width="12" height="10" fill="none" stroke="#fff" stroke-width="1.6"/><path d="M1 2h12M1 18h12M16 2v16" stroke="#fff" stroke-width="1.6"/></svg>
<svg class="a" style="left:157px;top:1049px" width="25" height="24" viewBox="0 0 25 24"><rect x="3" y="2" width="19" height="15" fill="#3aa0e8"/><rect x="1" y="17" width="23" height="3" fill="#1a70c0"/><rect x="9" y="20" width="7" height="3" fill="#1a70c0"/><rect x="6" y="4" width="13" height="3" fill="#70c8f8"/></svg>
<svg class="a" style="left:205px;top:1050px" width="26" height="22" viewBox="0 0 26 22"><rect x="1" y="7" width="24" height="11" rx="2" fill="#e0e0e0"/><rect x="5" y="2" width="16" height="6" fill="#f4f4f4"/><rect x="5" y="14" width="16" height="6" fill="#fafafa"/><path d="M4 11h18" stroke="#999" stroke-width="0.8"/></svg>
<svg class="a" style="left:255px;top:1048px" width="26" height="26" viewBox="0 0 26 26"><circle cx="13" cy="13" r="12" fill="#1ed760"/><path d="M6.5 9.5 Q13 7 19.5 10.5 M7.5 13 Q13 11 18.5 14 M8.5 16.5 Q13 15 17.5 17.5" stroke="#111" stroke-width="2" fill="none" stroke-linecap="round"/></svg>
<svg class="a" style="left:304px;top:1048px" width="25" height="26" viewBox="0 0 25 26"><rect x="6" y="2" width="18" height="22" fill="#fff" stroke="#99b" stroke-width="0.8"/><path d="M10 8h11M10 11h11M10 14h11M10 17h11" stroke="#4a7ad0" stroke-width="1"/><rect x="1" y="5" width="13" height="15" fill="#2a5ab0"/><path d="M3 8 L5 17 L7.5 11 L10 17 L12 8" stroke="#fff" stroke-width="1.5" fill="none"/></svg>
<svg class="a" style="left:355px;top:1049px" width="24" height="22" viewBox="0 0 24 22"><path d="M1 3 H9 L11 5 H23 V20 H1 Z" fill="#f8c840"/><rect x="1" y="8" width="22" height="12" fill="#fcd860"/><rect x="8" y="13" width="8" height="7" fill="#2a80d8"/></svg>
<svg class="a" style="left:404px;top:1048px" width="20" height="26" viewBox="0 0 20 26"><rect x="1" y="1" width="18" height="24" rx="2" fill="#4a5a6a"/><rect x="3" y="3" width="14" height="5" fill="#5ac8f0"/><path d="M4 11h3v3H4zM8.5 11h3v3h-3zM13 11h3v3h-3zM4 15.5h3v3H4zM8.5 15.5h3v3h-3zM13 15.5h3v3h-3zM4 20h3v3H4zM8.5 20h3v3h-3zM13 20h3v3h-3z" fill="#d8e4ea"/></svg>
<svg class="a" style="left:451px;top:1048px" width="26" height="26" viewBox="0 0 26 26"><ellipse cx="11" cy="15" rx="10" ry="8" fill="#e8dcc8"/><circle cx="6" cy="13" r="2" fill="#e04040"/><circle cx="10" cy="10" r="2" fill="#40a0e0"/><circle cx="15" cy="11" r="2" fill="#40c040"/><circle cx="7" cy="18" r="2" fill="#f0c020"/><path d="M14 20 L24 2" stroke="#c89040" stroke-width="2.5"/></svg>
<svg class="a" style="left:500px;top:1049px" width="24" height="24" viewBox="0 0 24 24"><path d="M12 1 L23 12 L12 23 L1 12 Z" fill="#2a5ad8"/><path d="M8 9 L15 9 L11 13 L16 13 L9 19" stroke="#111" stroke-width="2" fill="none"/></svg>
<svg class="a" style="left:549px;top:1048px" width="26" height="26" viewBox="0 0 26 26"><circle cx="13" cy="13" r="12" fill="#e8453c"/><path d="M13 13 L2.6 19 A12 12 0 0 0 19 23.4 Z" fill="#34a853"/><path d="M13 13 L19 23.4 A12 12 0 0 0 23.4 7 L13 7 Z" fill="#fbbc05"/><circle cx="13" cy="13" r="5.5" fill="#fff"/><circle cx="13" cy="13" r="4.3" fill="#4285f4"/></svg>
<div class="a" style="left:587px;top:1040px;width:44px;height:40px;background:#2e2e2e"></div>
<div class="a" style="left:587px;top:1078px;width:44px;height:2px;background:#b4b4b4"></div><div class="a" style="left:541px;top:1078px;width:41px;height:2px;background:#b4b4b4"></div>
<svg class="a" style="left:598px;top:1049px" width="22" height="22" viewBox="0 0 22 22"><line x1="5" y1="7" x2="5" y2="20" stroke="#d04040"/><rect x="2" y="10" width="6" height="7" fill="#f07070"/><line x1="16" y1="1" x2="16" y2="21" stroke="#30a030"/><rect x="13" y="4" width="6" height="12" fill="#50d050"/></svg>
<div class="t" style="left:1870px;top:1046px;font-size:11.2px;color:#fff">08:38</div>
<div class="t" style="left:1856px;top:1064px;font-size:11.4px;color:#fff">19/12/2023</div>
<div class="a" style="left:1918px;top:1040px;width:1px;height:40px;background:#8a8a8a"></div>
<div class="a" style="left:0;top:1079px;width:1919px;height:1px;background:#5a5a5a"></div>

</body></html>
